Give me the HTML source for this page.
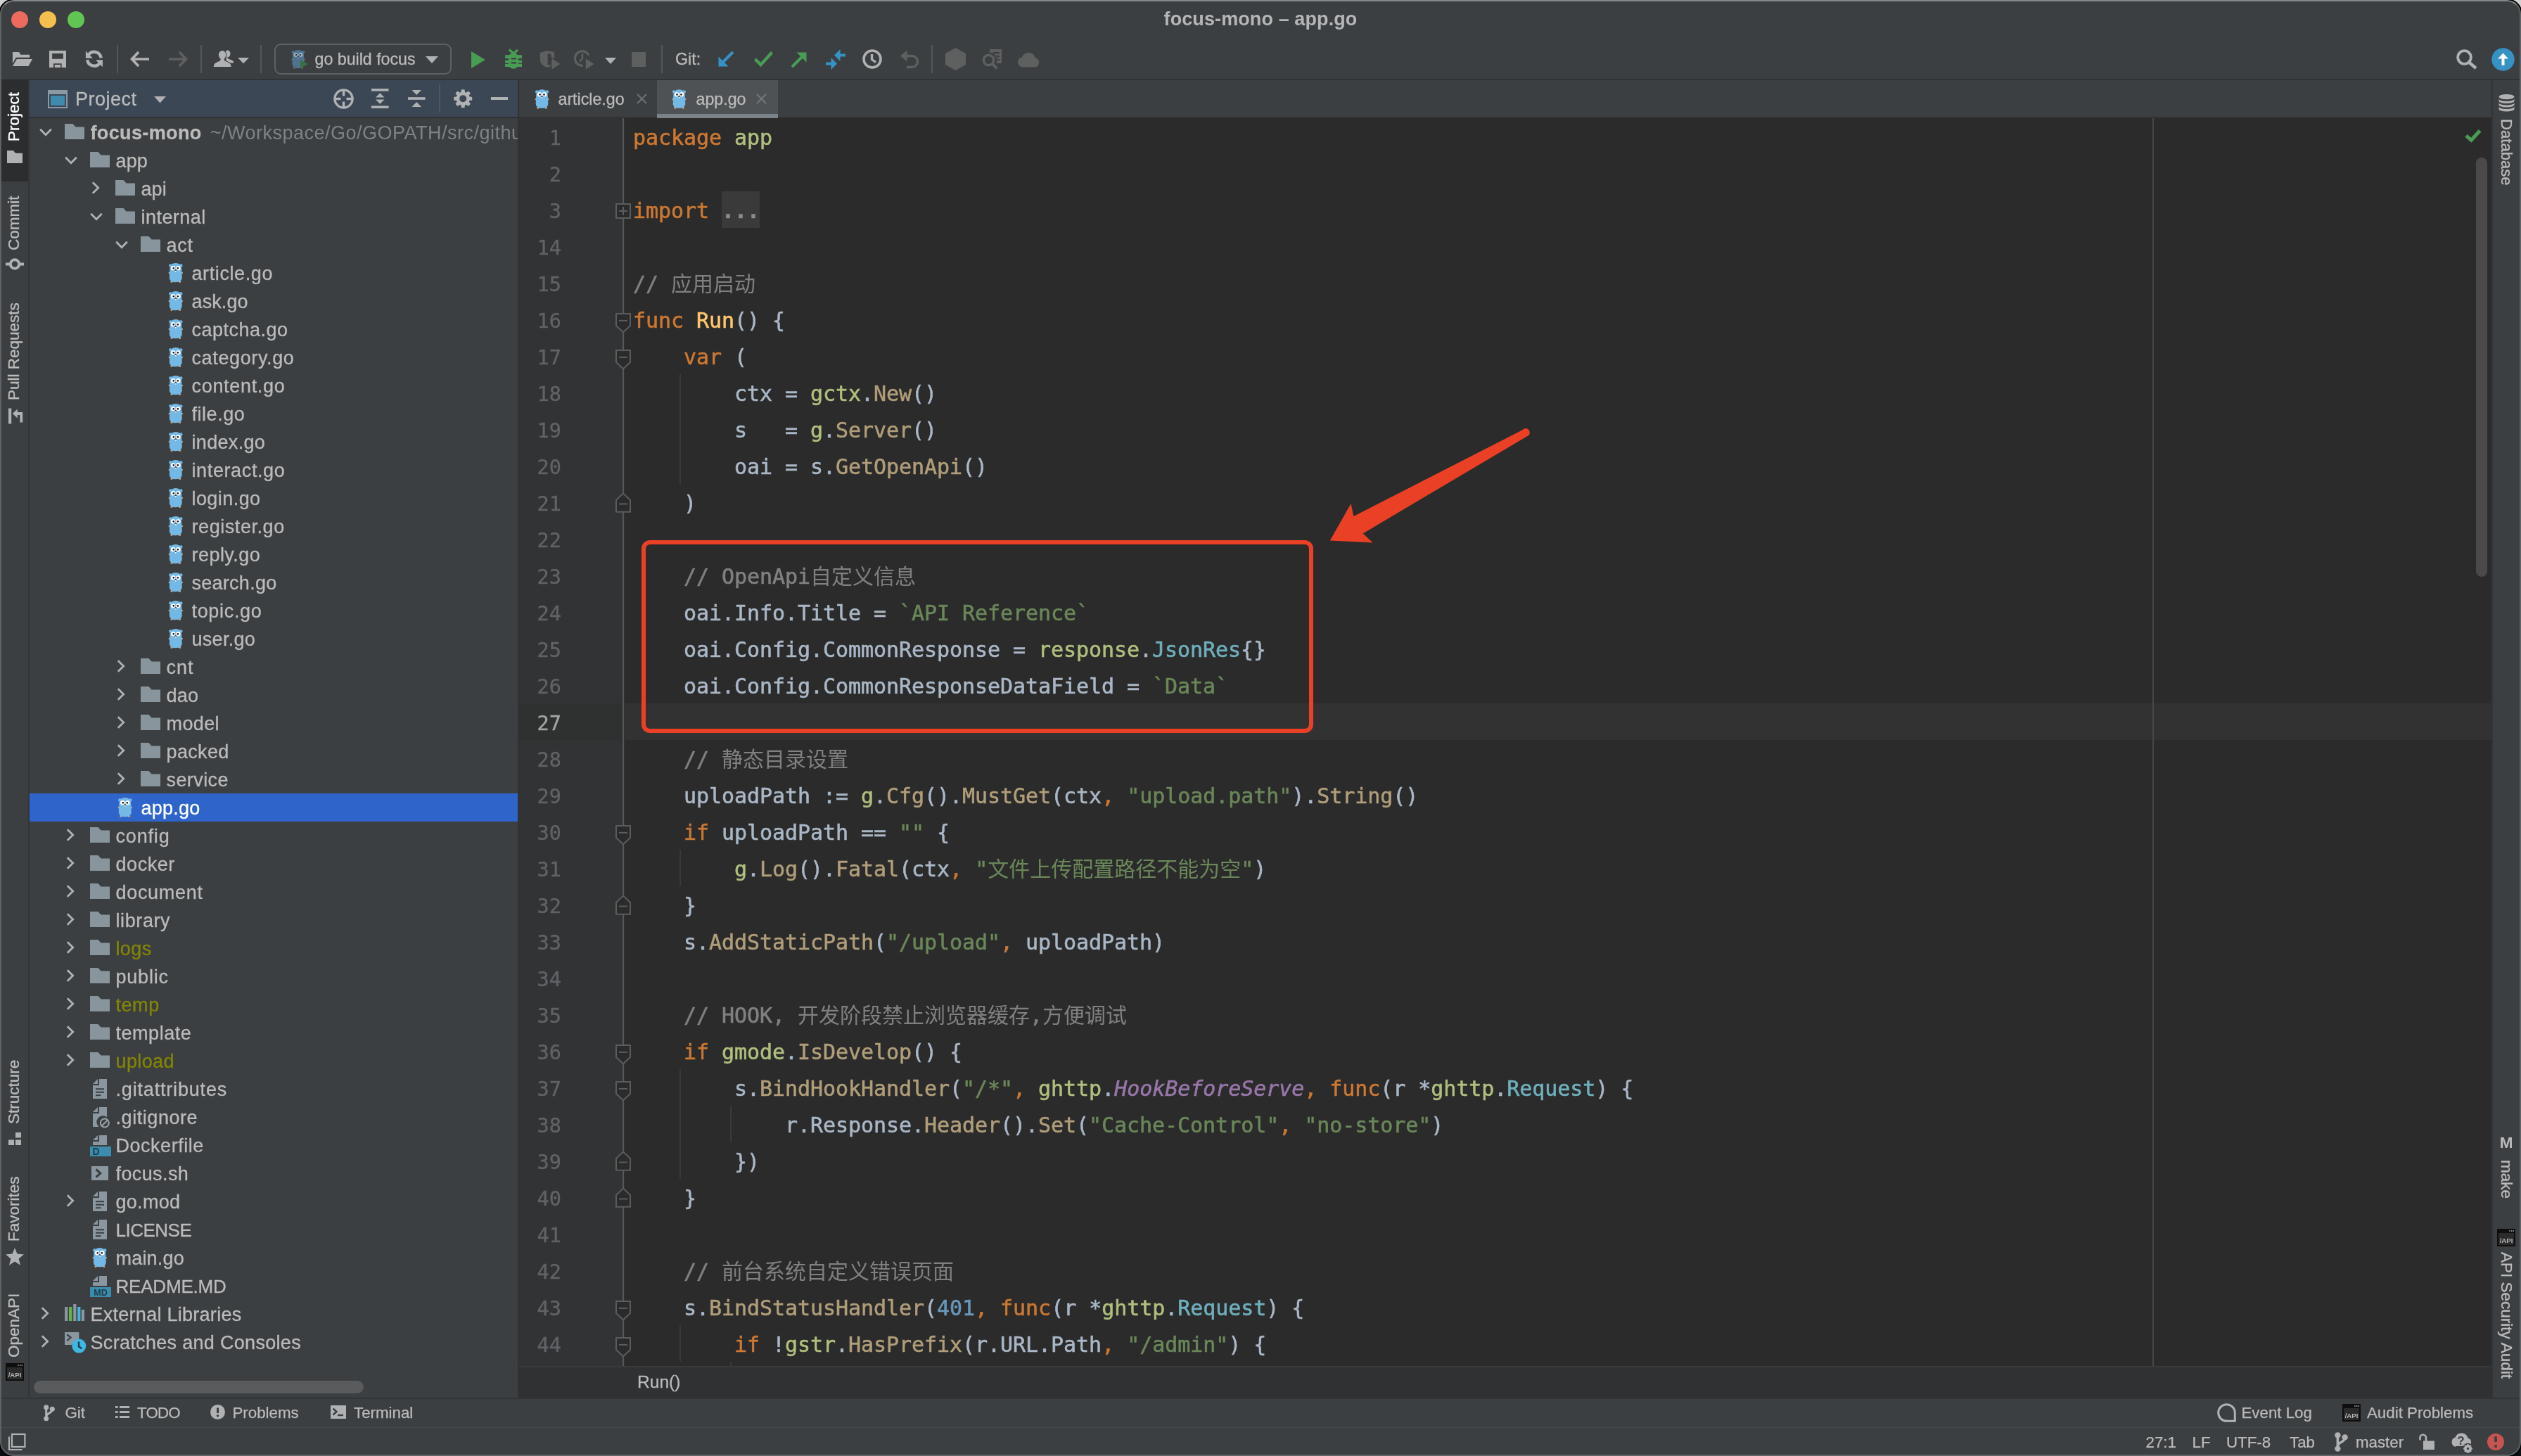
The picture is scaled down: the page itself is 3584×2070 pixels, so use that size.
<!DOCTYPE html>
<html lang="zh">
<head>
<meta charset="utf-8">
<title>focus-mono – app.go</title>
<style>
*{box-sizing:border-box;margin:0;padding:0}
html,body{width:3584px;height:2070px;overflow:hidden;background:linear-gradient(#d2d2d2 0,#d2d2d2 50%,#0c0f14 50%,#0c0f14 100%)}
body{position:relative;font-family:"Liberation Sans","Noto Sans CJK SC",sans-serif;color:#bbbbbb;-webkit-font-smoothing:antialiased}
.a{position:absolute}
.ui{font-size:27px;letter-spacing:.5px;white-space:nowrap;line-height:40px;-webkit-text-stroke:.3px}
.sm{font-size:22.3px;white-space:nowrap;line-height:28px;color:#bbbbbb;-webkit-text-stroke:.25px}
.code{font-family:"DejaVu Sans Mono","Liberation Mono","Noto Sans CJK SC",monospace;font-size:30px;letter-spacing:-.06px;white-space:pre;line-height:52px;color:#a9b7c6;-webkit-text-stroke:.55px}
.ln{font-family:"DejaVu Sans Mono","Liberation Mono",monospace;font-size:28.6px;letter-spacing:0;line-height:52px;color:#606366;text-align:right;white-space:pre;-webkit-text-stroke:.35px}
.k{color:#cc7832}.s{color:#6a8759}.c{color:#808080}.n{color:#6897bb}.fd{color:#ffc66d}.fc{color:#b09d79}.p{color:#afbf7e}.t{color:#6fafbd}.cn{color:#9876aa;font-style:italic}
.cj{font-family:"Noto Sans CJK SC",sans-serif;letter-spacing:0;line-height:0;-webkit-text-stroke:0}
.row{position:absolute;left:42px;width:694px;height:40px}
.row span{position:absolute;top:0;line-height:40px}
.ig{color:#848504}
svg{position:absolute;overflow:visible}
.vt{position:absolute;white-space:nowrap;-webkit-text-stroke:.35px;font-size:22px;line-height:26px;color:#bbbbbb;transform-origin:0 0}
</style>
</head>
<body>
<div id="app" style="position:absolute;left:0;top:0;width:3584px;height:2070px;will-change:transform;background:#3c3f41;border-radius:20px;overflow:hidden;box-shadow:0 0 0 2px #000">
<div class="a" style="left:16px;top:16px;width:24px;height:24px;background:#ed6a5e;border-radius:50%"></div>
<div class="a" style="left:56px;top:16px;width:24px;height:24px;background:#f5bf4f;border-radius:50%"></div>
<div class="a" style="left:96px;top:16px;width:24px;height:24px;background:#61c554;border-radius:50%"></div>
<div class="a" style="left:0;top:9px;width:3584px;text-align:center;font-weight:bold;font-size:27px;letter-spacing:.1px;line-height:36px;color:#b4b6b8">focus-mono – app.go</div>
<div class="a" style="left:0px;top:112px;width:3584px;height:2px;background:#313335;"></div>
<svg style="left:17px;top:73px;" width="30" height="22" viewBox="0 0 30 22"><path d="M0.93 0.9 H10.06 L12.4 4.87 H25.1 V8.8 H5.7 L0.93 17.5 Z M6.9 11 H29.1 L23.5 20.9 H0.93 Z" fill="#afb1b3"/></svg>
<svg style="left:70px;top:72px;" width="24" height="24" viewBox="0 0 24 24"><path d="M0 0H24V24H17.7V18.2H6V24H0Z M4.1 4.1V11.8H19.9V4.1Z M7.8 19.9h8.4v4.1h-8.4z" fill="#afb1b3" fill-rule="evenodd"/></svg>
<svg style="left:121px;top:71px;" width="26" height="26" viewBox="0 0 26 26"><path d="M4.8 7.1 A9.9 9.9 0 0 1 22.7 11.4" fill="none" stroke="#afb1b3" stroke-width="4.4"/><path d="M3.1 14.1 A9.9 9.9 0 0 0 21 18.4" fill="none" stroke="#afb1b3" stroke-width="4.4"/><path d="M0.9 1.6 V11.8 H11 Z" fill="#afb1b3"/><path d="M24.95 24.2 V14.26 H15 Z" fill="#afb1b3"/></svg>
<div class="a" style="left:166px;top:64px;width:2px;height:40px;background:#545657;"></div>
<div class="a" style="left:284.5px;top:64px;width:2px;height:40px;background:#545657;"></div>
<div class="a" style="left:369.6px;top:64px;width:2px;height:40px;background:#545657;"></div>
<div class="a" style="left:940px;top:64px;width:2px;height:40px;background:#545657;"></div>
<div class="a" style="left:1324px;top:64px;width:2px;height:40px;background:#545657;"></div>
<svg style="left:185px;top:72px;" width="28" height="24" viewBox="0 0 28 24"><path d="M12 2 L2.5 12 L12 22 M2.5 12 H27" fill="none" stroke="#afb1b3" stroke-width="3.6"/></svg>
<svg style="left:239px;top:72px;" width="28" height="24" viewBox="0 0 28 24"><path d="M16 2 L25.5 12 L16 22 M25.5 12 H1" fill="none" stroke="#5e6060" stroke-width="3.6"/></svg>
<svg style="left:303px;top:71px;" width="30" height="25" viewBox="0 0 30 25"><ellipse cx="20.6" cy="5.5" rx="3.9" ry="5" fill="#afb1b3"/><path d="M18 8 C20 12.8 23.5 13.4 26 14.3 C28.3 15.2 29.2 16.4 29.2 18.4 H19 Z" fill="#afb1b3"/><g stroke="#3c3f41" stroke-width="1.8"><ellipse cx="13.05" cy="7.1" rx="5.2" ry="6.2" fill="#afb1b3"/><path d="M10.8 12.5 C10.8 15.5 9.5 16 6 17.2 C2.5 18.5 0.9 20.5 0.7 23.9 H25.7 C25.5 20.5 23.9 18.5 20.4 17.2 C16.9 16 15.6 15.5 15.6 12.5 Z" fill="#afb1b3"/></g><ellipse cx="13.05" cy="7.1" rx="5.2" ry="6.2" fill="#afb1b3"/><path d="M10.8 12 C10.8 15.5 9.5 16 6 17.2 C2.5 18.5 0.9 20.5 0.7 23.9 H25.7 C25.5 20.5 23.9 18.5 20.4 17.2 C16.9 16 15.6 15.5 15.6 12 Z" fill="#afb1b3"/></svg>
<svg style="left:338px;top:81.8px;" width="16" height="8.2" viewBox="0 0 16 8.2"><path d="M0 0H16 L8 8.2 Z" fill="#afb1b3"/></svg>
<div class="a" style="left:390px;top:62px;width:252px;height:43.5px;border:2px solid #5e6163;border-radius:9px"></div>
<svg style="left:413px;top:70px;" width="22" height="28" viewBox="0 0 22 30"><circle cx="3.4" cy="4.6" r="2.4" fill="#4e7390"/><circle cx="18.6" cy="4.6" r="2.4" fill="#4e7390"/><circle cx="1.9" cy="15.5" r="1.4" fill="#6f6559"/><circle cx="20.1" cy="15.5" r="1.4" fill="#6f6559"/><circle cx="5" cy="28.3" r="1.6" fill="#6f6559"/><circle cx="17" cy="28.3" r="1.6" fill="#6f6559"/><path d="M2.3 10.5 C2.3 4 6 1 11 1 C16 1 19.7 4 19.7 10.5 L20.2 22 C20.2 27 16 29 11 29 C6 29 1.8 27 1.8 22 Z" fill="#4e7390"/><circle cx="7.3" cy="8.4" r="3.3" fill="#9fb0bb"/><circle cx="14.7" cy="8.4" r="3.3" fill="#9fb0bb"/><circle cx="7.9" cy="8.6" r="1.35" fill="#2e3a42"/><circle cx="14.1" cy="8.6" r="1.35" fill="#2e3a42"/><ellipse cx="11" cy="11.6" rx="1.5" ry="1" fill="#2e3a42"/><rect x="10.2" y="12.2" width="1.6" height="1.7" fill="#9fb0bb"/></svg>
<svg style="left:427px;top:85px;" width="11" height="12" viewBox="0 0 11 12"><path d="M0 0L11 6L0 12Z" fill="#3a6f45"/></svg>
<div class="a " style="left:447.5px;top:70px;font-size:23.2px;line-height:28px;white-space:nowrap;color:#bbbbbb;-webkit-text-stroke:.3px">go build focus</div>
<svg style="left:605px;top:80px;" width="18" height="10" viewBox="0 0 18 10"><path d="M0 0H18 L9 10 Z" fill="#afb1b3"/></svg>
<svg style="left:670px;top:72.5px;" width="20" height="24" viewBox="0 0 20 24"><path d="M0 0L20 12L0 24Z" fill="#499c54"/></svg>
<svg style="left:717px;top:70px;" width="26" height="28" viewBox="0 0 26 28"><path d="M6.8 0.3 L12.9 6 L19 1" stroke="#499c54" stroke-width="3.2" fill="none"/><path d="M12.95 5.5 C8.5 5.5 6 8.5 6 12.5 V20 C6 24.5 8.7 27.7 12.95 27.7 C17.2 27.7 19.9 24.5 19.9 20 V12.5 C19.9 8.5 17.4 5.5 12.95 5.5 Z" fill="#499c54"/><path d="M1.1 8.3H25V13H1.1Z M1.1 15.8H25V19.8H1.1Z M1.1 21H25V24.9H1.1Z" fill="#499c54"/><path d="M9.6 12.2H17.1V14.6H9.6Z M9.6 18.2H17.1V20.6H9.6Z" fill="#3c3f41"/></svg>
<svg style="left:767px;top:71px;" width="31" height="30" viewBox="0 0 31 30"><path d="M0.8 4.1 L10.7 0.9 L21.06 2.9 V14 C21 19 17 23 11.1 25.1 C5 23 0.8 19 0.8 14 Z" fill="#5e6060"/><rect x="11.6" y="5.7" width="4.6" height="15.4" fill="#3c3f41"/><path d="M16.7 10.8 L30.6 19.96 L16.7 29.1 Z" fill="#5e6060" stroke="#3c3f41" stroke-width="1.4"/></svg>
<svg style="left:815px;top:71px;" width="31" height="30" viewBox="0 0 31 30"><path d="M22.03 7.65 A10.3 10.3 0 1 0 13.6 22.26" fill="none" stroke="#5e6060" stroke-width="3.2"/><path d="M12.9 5.6 V12 L9.3 16.4" fill="none" stroke="#5e6060" stroke-width="2.6"/><path d="M17.1 10.8 L30.6 19.96 L17.1 29.1 Z" fill="#5e6060" stroke="#3c3f41" stroke-width="1.4"/></svg>
<svg style="left:860px;top:82px;" width="16" height="9" viewBox="0 0 16 9"><path d="M0 0H16 L8 9 Z" fill="#afb1b3"/></svg>
<div class="a" style="left:897.5px;top:74px;width:20.5px;height:20.5px;background:#5e6060;"></div>
<div class="a " style="left:960px;top:70px;font-size:23.2px;line-height:28px;white-space:nowrap;color:#bbbbbb;-webkit-text-stroke:.3px">Git:</div>
<svg style="left:1021px;top:72px;" width="23" height="23" viewBox="0 0 23 23"><path d="M21 2 L5 18" stroke="#3592c4" stroke-width="4" fill="none"/><path d="M0.5 8.5 V22.5 H14.5 Z" fill="#3592c4"/></svg>
<svg style="left:1072px;top:72px;" width="27" height="23" viewBox="0 0 27 23"><path d="M1.5 12 L9.5 20 L25.5 2.5" stroke="#499c54" stroke-width="4.4" fill="none"/></svg>
<svg style="left:1124px;top:73.5px;" width="23" height="23" viewBox="0 0 23 23"><path d="M2 21 L18 5" stroke="#499c54" stroke-width="4" fill="none"/><path d="M8.5 0.5 H22.5 V14.5 Z" fill="#499c54"/></svg>
<svg style="left:1174px;top:69.5px;" width="28" height="29" viewBox="0 0 28 29"><path d="M28 8.5 H18" stroke="#3592c4" stroke-width="4"/><path d="M12 8.5 L20.5 0 V17 Z" fill="#3592c4"/><path d="M0 20.5 H10" stroke="#3592c4" stroke-width="4"/><path d="M16 20.5 L7.5 12 V29 Z" fill="#3592c4"/></svg>
<svg style="left:1226px;top:70px;" width="28" height="28" viewBox="0 0 28 28"><circle cx="14" cy="14" r="12" fill="none" stroke="#afb1b3" stroke-width="3.6"/><path d="M13.5 7 V14.5 L19 18.5" fill="none" stroke="#afb1b3" stroke-width="3.4"/></svg>
<svg style="left:1279.5px;top:70.5px;" width="27" height="26" viewBox="0 0 27 26"><path d="M5 8.5 H16.5 A8 8 0 0 1 16.5 24.5 H9" fill="none" stroke="#5e6060" stroke-width="3.4"/><path d="M0 8.5 L9.5 0.5 V16.5 Z" fill="#5e6060"/></svg>
<svg style="left:1344px;top:68px;" width="29" height="32" viewBox="0 0 29 32"><path d="M14.5 0 L29 8 V24 L14.5 32 L0 24 V8 Z" fill="#5e6060"/></svg>
<svg style="left:1396px;top:70px;" width="29" height="29" viewBox="0 0 29 29"><path d="M11 0 H28 V20 H20.5 A11 11 0 0 0 11 4.6 Z M16 4 h9 v2.4 h-9z M19 8.8 h6 v2.4 h-6z M21 13.6 h4 v2.4 h-4z" fill="#5e6060" fill-rule="evenodd"/><circle cx="9.5" cy="15.5" r="7.2" fill="none" stroke="#5e6060" stroke-width="3.4"/><path d="M14.5 20.5 L21.5 27.5" stroke="#5e6060" stroke-width="3.8"/></svg>
<svg style="left:1446px;top:73px;" width="32" height="23" viewBox="0 0 32 23"><path d="M8 22.5 A7.2 7.2 0 0 1 7 8.2 A10 10 0 0 1 26 9.5 A6.6 6.6 0 0 1 25 22.5 Z" fill="#5e6060"/></svg>
<svg style="left:3492px;top:70px;" width="30" height="28" viewBox="0 0 30 28"><circle cx="11.5" cy="11.5" r="9.3" fill="none" stroke="#afb1b3" stroke-width="3.8"/><path d="M18 18.5 L28 27" stroke="#afb1b3" stroke-width="4.4"/></svg>
<svg style="left:3542px;top:68px;" width="33" height="33" viewBox="0 0 33 33"><circle cx="16.5" cy="16.5" r="16.2" fill="#3592c4"/><path d="M16.5 25 V11" stroke="#fff" stroke-width="4"/><path d="M9 15.5 L16.5 7.5 L24 15.5 Z" fill="#fff"/></svg>
<div class="a" style="left:42px;top:114px;width:694px;height:52px;background:#3b4754;"></div>
<div class="a" style="left:42px;top:166px;width:694px;height:2px;background:#2f3133;"></div>
<svg style="left:68px;top:128px;" width="28" height="26" viewBox="0 0 28 26"><rect x="0" y="0" width="28" height="26" fill="#8b99a5"/><rect x="2" y="6" width="24" height="18" fill="#3b4754"/><rect x="4" y="8" width="20" height="14" fill="#3d8bad"/></svg>
<div class="a ui" style="left:107px;top:121px;color:#bbbbbb">Project</div>
<svg style="left:219px;top:137px;" width="17" height="9.5" viewBox="0 0 17 9.5"><path d="M0 0H17 L8.5 9.5 Z" fill="#afb1b3"/></svg>
<svg style="left:473.5px;top:125.5px;" width="29" height="29" viewBox="0 0 29 29"><circle cx="14.5" cy="14.5" r="12.6" fill="none" stroke="#afb1b3" stroke-width="3.4"/><path d="M14.5 1V10.5M14.5 18.5V28M1 14.5H10.5M18.5 14.5H28" stroke="#afb1b3" stroke-width="3.4"/></svg>
<svg style="left:527.5px;top:126px;" width="24.5" height="28" viewBox="0 0 24.5 28"><rect x="0" y="0" width="24.5" height="3.6" fill="#afb1b3"/><rect x="0" y="24.4" width="24.5" height="3.6" fill="#afb1b3"/><path d="M6 12.5 L12.25 6.2 L18.5 12.5Z M6 15.5 L12.25 21.8 L18.5 15.5Z" fill="#afb1b3"/></svg>
<svg style="left:579.5px;top:127px;" width="24.5" height="26" viewBox="0 0 24.5 26"><rect x="0" y="11.2" width="24.5" height="3.6" fill="#afb1b3"/><path d="M5.5 1 L12.25 8 L19 1Z M5.5 25 L12.25 18 L19 25Z" fill="#afb1b3"/></svg>
<div class="a" style="left:624px;top:120px;width:2px;height:40px;background:#52575c;"></div>
<svg style="left:644.6px;top:126.6px;" width="26.4" height="26.4" viewBox="0 0 26.4 26.4"><path d="M10.97 0.19 L15.43 0.19 L16.13 4.06 L17.59 4.66 L20.82 2.42 L23.98 5.58 L21.74 8.81 L22.34 10.27 L26.21 10.97 L26.21 15.43 L22.34 16.13 L21.74 17.59 L23.98 20.82 L20.82 23.98 L17.59 21.74 L16.13 22.34 L15.43 26.21 L10.97 26.21 L10.27 22.34 L8.81 21.74 L5.58 23.98 L2.42 20.82 L4.66 17.59 L4.06 16.13 L0.19 15.43 L0.19 10.97 L4.06 10.27 L4.66 8.81 L2.42 5.58 L5.58 2.42 L8.81 4.66 L10.27 4.06Z M13.2 8.2 a5 5 0 1 0 0.01 0Z" fill="#afb1b3" fill-rule="evenodd"/></svg>
<div class="a" style="left:697.5px;top:137.5px;width:24.5px;height:4px;background:#afb1b3;"></div>
<svg style="left:56px;top:181.5px;" width="18" height="12" viewBox="0 0 18 12"><path d="M1.2 1.8 L9 9.7 L16.8 1.8" fill="none" stroke="#afb1b3" stroke-width="2.8"/></svg>
<svg style="left:91.8px;top:175.8px;" width="28" height="22" viewBox="0 0 28 22"><path d="M0 0 H11.5 L15.5 4.5 H28 V22 H0 Z" fill="#88959d"/></svg>
<div class="a ui" style="left:128.5px;top:169px;color:#bbbbbb;max-width:607.5px;overflow:hidden;letter-spacing:0.37px;font-size:27px"><b style="letter-spacing:0.37px">focus-mono</b><span style="color:#7f8284;padding-left:12px;-webkit-text-stroke:0;letter-spacing:.5px">~/Workspace/Go/GOPATH/src/githu</span></div>
<svg style="left:92px;top:221.5px;" width="18" height="12" viewBox="0 0 18 12"><path d="M1.2 1.8 L9 9.7 L16.8 1.8" fill="none" stroke="#afb1b3" stroke-width="2.8"/></svg>
<svg style="left:127.8px;top:215.8px;" width="28" height="22" viewBox="0 0 28 22"><path d="M0 0 H11.5 L15.5 4.5 H28 V22 H0 Z" fill="#88959d"/></svg>
<div class="a ui" style="left:164.5px;top:209px;color:#bbbbbb;max-width:571.5px;overflow:hidden;letter-spacing:0.15px;font-size:27px">app</div>
<svg style="left:129.7px;top:257.8px;" width="12" height="18" viewBox="0 0 12 18"><path d="M1.8 1.2 L9.7 9 L1.8 16.8" fill="none" stroke="#afb1b3" stroke-width="2.8"/></svg>
<svg style="left:163.8px;top:255.8px;" width="28" height="22" viewBox="0 0 28 22"><path d="M0 0 H11.5 L15.5 4.5 H28 V22 H0 Z" fill="#88959d"/></svg>
<div class="a ui" style="left:200.5px;top:249px;color:#bbbbbb;max-width:535.5px;overflow:hidden;letter-spacing:0.06px;font-size:27px">api</div>
<svg style="left:128px;top:301.5px;" width="18" height="12" viewBox="0 0 18 12"><path d="M1.2 1.8 L9 9.7 L16.8 1.8" fill="none" stroke="#afb1b3" stroke-width="2.8"/></svg>
<svg style="left:163.8px;top:295.8px;" width="28" height="22" viewBox="0 0 28 22"><path d="M0 0 H11.5 L15.5 4.5 H28 V22 H0 Z" fill="#88959d"/></svg>
<div class="a ui" style="left:200.5px;top:289px;color:#bbbbbb;max-width:535.5px;overflow:hidden;letter-spacing:0.46px;font-size:27px">internal</div>
<svg style="left:164px;top:341.5px;" width="18" height="12" viewBox="0 0 18 12"><path d="M1.2 1.8 L9 9.7 L16.8 1.8" fill="none" stroke="#afb1b3" stroke-width="2.8"/></svg>
<svg style="left:199.8px;top:335.8px;" width="28" height="22" viewBox="0 0 28 22"><path d="M0 0 H11.5 L15.5 4.5 H28 V22 H0 Z" fill="#88959d"/></svg>
<div class="a ui" style="left:236.5px;top:329px;color:#bbbbbb;max-width:499.5px;overflow:hidden;letter-spacing:0.79px;font-size:27px">act</div>
<svg style="left:239px;top:373.2px;" width="21.6" height="29.2" viewBox="0 0 22 30"><circle cx="3.4" cy="4.6" r="2.4" fill="#74b8e6"/><circle cx="18.6" cy="4.6" r="2.4" fill="#74b8e6"/><circle cx="1.9" cy="15.5" r="1.4" fill="#c9a27e"/><circle cx="20.1" cy="15.5" r="1.4" fill="#c9a27e"/><circle cx="5" cy="28.3" r="1.6" fill="#c9a27e"/><circle cx="17" cy="28.3" r="1.6" fill="#c9a27e"/><path d="M2.3 10.5 C2.3 4 6 1 11 1 C16 1 19.7 4 19.7 10.5 L20.2 22 C20.2 27 16 29 11 29 C6 29 1.8 27 1.8 22 Z" fill="#74b8e6"/><circle cx="7.3" cy="8.4" r="3.3" fill="#ffffff"/><circle cx="14.7" cy="8.4" r="3.3" fill="#ffffff"/><circle cx="7.9" cy="8.6" r="1.35" fill="#1b1b1b"/><circle cx="14.1" cy="8.6" r="1.35" fill="#1b1b1b"/><ellipse cx="11" cy="11.6" rx="1.5" ry="1" fill="#3b2f26"/><rect x="10.2" y="12.2" width="1.6" height="1.7" fill="#ffffff"/></svg>
<div class="a ui" style="left:272.5px;top:369px;color:#bbbbbb;max-width:463.5px;overflow:hidden;letter-spacing:0.60px;font-size:27px">article.go</div>
<svg style="left:239px;top:413.2px;" width="21.6" height="29.2" viewBox="0 0 22 30"><circle cx="3.4" cy="4.6" r="2.4" fill="#74b8e6"/><circle cx="18.6" cy="4.6" r="2.4" fill="#74b8e6"/><circle cx="1.9" cy="15.5" r="1.4" fill="#c9a27e"/><circle cx="20.1" cy="15.5" r="1.4" fill="#c9a27e"/><circle cx="5" cy="28.3" r="1.6" fill="#c9a27e"/><circle cx="17" cy="28.3" r="1.6" fill="#c9a27e"/><path d="M2.3 10.5 C2.3 4 6 1 11 1 C16 1 19.7 4 19.7 10.5 L20.2 22 C20.2 27 16 29 11 29 C6 29 1.8 27 1.8 22 Z" fill="#74b8e6"/><circle cx="7.3" cy="8.4" r="3.3" fill="#ffffff"/><circle cx="14.7" cy="8.4" r="3.3" fill="#ffffff"/><circle cx="7.9" cy="8.6" r="1.35" fill="#1b1b1b"/><circle cx="14.1" cy="8.6" r="1.35" fill="#1b1b1b"/><ellipse cx="11" cy="11.6" rx="1.5" ry="1" fill="#3b2f26"/><rect x="10.2" y="12.2" width="1.6" height="1.7" fill="#ffffff"/></svg>
<div class="a ui" style="left:272.5px;top:409px;color:#bbbbbb;max-width:463.5px;overflow:hidden;letter-spacing:0.11px;font-size:27px">ask.go</div>
<svg style="left:239px;top:453.2px;" width="21.6" height="29.2" viewBox="0 0 22 30"><circle cx="3.4" cy="4.6" r="2.4" fill="#74b8e6"/><circle cx="18.6" cy="4.6" r="2.4" fill="#74b8e6"/><circle cx="1.9" cy="15.5" r="1.4" fill="#c9a27e"/><circle cx="20.1" cy="15.5" r="1.4" fill="#c9a27e"/><circle cx="5" cy="28.3" r="1.6" fill="#c9a27e"/><circle cx="17" cy="28.3" r="1.6" fill="#c9a27e"/><path d="M2.3 10.5 C2.3 4 6 1 11 1 C16 1 19.7 4 19.7 10.5 L20.2 22 C20.2 27 16 29 11 29 C6 29 1.8 27 1.8 22 Z" fill="#74b8e6"/><circle cx="7.3" cy="8.4" r="3.3" fill="#ffffff"/><circle cx="14.7" cy="8.4" r="3.3" fill="#ffffff"/><circle cx="7.9" cy="8.6" r="1.35" fill="#1b1b1b"/><circle cx="14.1" cy="8.6" r="1.35" fill="#1b1b1b"/><ellipse cx="11" cy="11.6" rx="1.5" ry="1" fill="#3b2f26"/><rect x="10.2" y="12.2" width="1.6" height="1.7" fill="#ffffff"/></svg>
<div class="a ui" style="left:272.5px;top:449px;color:#bbbbbb;max-width:463.5px;overflow:hidden;letter-spacing:0.49px;font-size:27px">captcha.go</div>
<svg style="left:239px;top:493.2px;" width="21.6" height="29.2" viewBox="0 0 22 30"><circle cx="3.4" cy="4.6" r="2.4" fill="#74b8e6"/><circle cx="18.6" cy="4.6" r="2.4" fill="#74b8e6"/><circle cx="1.9" cy="15.5" r="1.4" fill="#c9a27e"/><circle cx="20.1" cy="15.5" r="1.4" fill="#c9a27e"/><circle cx="5" cy="28.3" r="1.6" fill="#c9a27e"/><circle cx="17" cy="28.3" r="1.6" fill="#c9a27e"/><path d="M2.3 10.5 C2.3 4 6 1 11 1 C16 1 19.7 4 19.7 10.5 L20.2 22 C20.2 27 16 29 11 29 C6 29 1.8 27 1.8 22 Z" fill="#74b8e6"/><circle cx="7.3" cy="8.4" r="3.3" fill="#ffffff"/><circle cx="14.7" cy="8.4" r="3.3" fill="#ffffff"/><circle cx="7.9" cy="8.6" r="1.35" fill="#1b1b1b"/><circle cx="14.1" cy="8.6" r="1.35" fill="#1b1b1b"/><ellipse cx="11" cy="11.6" rx="1.5" ry="1" fill="#3b2f26"/><rect x="10.2" y="12.2" width="1.6" height="1.7" fill="#ffffff"/></svg>
<div class="a ui" style="left:272.5px;top:489px;color:#bbbbbb;max-width:463.5px;overflow:hidden;letter-spacing:0.62px;font-size:27px">category.go</div>
<svg style="left:239px;top:533.2px;" width="21.6" height="29.2" viewBox="0 0 22 30"><circle cx="3.4" cy="4.6" r="2.4" fill="#74b8e6"/><circle cx="18.6" cy="4.6" r="2.4" fill="#74b8e6"/><circle cx="1.9" cy="15.5" r="1.4" fill="#c9a27e"/><circle cx="20.1" cy="15.5" r="1.4" fill="#c9a27e"/><circle cx="5" cy="28.3" r="1.6" fill="#c9a27e"/><circle cx="17" cy="28.3" r="1.6" fill="#c9a27e"/><path d="M2.3 10.5 C2.3 4 6 1 11 1 C16 1 19.7 4 19.7 10.5 L20.2 22 C20.2 27 16 29 11 29 C6 29 1.8 27 1.8 22 Z" fill="#74b8e6"/><circle cx="7.3" cy="8.4" r="3.3" fill="#ffffff"/><circle cx="14.7" cy="8.4" r="3.3" fill="#ffffff"/><circle cx="7.9" cy="8.6" r="1.35" fill="#1b1b1b"/><circle cx="14.1" cy="8.6" r="1.35" fill="#1b1b1b"/><ellipse cx="11" cy="11.6" rx="1.5" ry="1" fill="#3b2f26"/><rect x="10.2" y="12.2" width="1.6" height="1.7" fill="#ffffff"/></svg>
<div class="a ui" style="left:272.5px;top:529px;color:#bbbbbb;max-width:463.5px;overflow:hidden;letter-spacing:0.68px;font-size:27px">content.go</div>
<svg style="left:239px;top:573.2px;" width="21.6" height="29.2" viewBox="0 0 22 30"><circle cx="3.4" cy="4.6" r="2.4" fill="#74b8e6"/><circle cx="18.6" cy="4.6" r="2.4" fill="#74b8e6"/><circle cx="1.9" cy="15.5" r="1.4" fill="#c9a27e"/><circle cx="20.1" cy="15.5" r="1.4" fill="#c9a27e"/><circle cx="5" cy="28.3" r="1.6" fill="#c9a27e"/><circle cx="17" cy="28.3" r="1.6" fill="#c9a27e"/><path d="M2.3 10.5 C2.3 4 6 1 11 1 C16 1 19.7 4 19.7 10.5 L20.2 22 C20.2 27 16 29 11 29 C6 29 1.8 27 1.8 22 Z" fill="#74b8e6"/><circle cx="7.3" cy="8.4" r="3.3" fill="#ffffff"/><circle cx="14.7" cy="8.4" r="3.3" fill="#ffffff"/><circle cx="7.9" cy="8.6" r="1.35" fill="#1b1b1b"/><circle cx="14.1" cy="8.6" r="1.35" fill="#1b1b1b"/><ellipse cx="11" cy="11.6" rx="1.5" ry="1" fill="#3b2f26"/><rect x="10.2" y="12.2" width="1.6" height="1.7" fill="#ffffff"/></svg>
<div class="a ui" style="left:272.5px;top:569px;color:#bbbbbb;max-width:463.5px;overflow:hidden;letter-spacing:0.54px;font-size:27px">file.go</div>
<svg style="left:239px;top:613.2px;" width="21.6" height="29.2" viewBox="0 0 22 30"><circle cx="3.4" cy="4.6" r="2.4" fill="#74b8e6"/><circle cx="18.6" cy="4.6" r="2.4" fill="#74b8e6"/><circle cx="1.9" cy="15.5" r="1.4" fill="#c9a27e"/><circle cx="20.1" cy="15.5" r="1.4" fill="#c9a27e"/><circle cx="5" cy="28.3" r="1.6" fill="#c9a27e"/><circle cx="17" cy="28.3" r="1.6" fill="#c9a27e"/><path d="M2.3 10.5 C2.3 4 6 1 11 1 C16 1 19.7 4 19.7 10.5 L20.2 22 C20.2 27 16 29 11 29 C6 29 1.8 27 1.8 22 Z" fill="#74b8e6"/><circle cx="7.3" cy="8.4" r="3.3" fill="#ffffff"/><circle cx="14.7" cy="8.4" r="3.3" fill="#ffffff"/><circle cx="7.9" cy="8.6" r="1.35" fill="#1b1b1b"/><circle cx="14.1" cy="8.6" r="1.35" fill="#1b1b1b"/><ellipse cx="11" cy="11.6" rx="1.5" ry="1" fill="#3b2f26"/><rect x="10.2" y="12.2" width="1.6" height="1.7" fill="#ffffff"/></svg>
<div class="a ui" style="left:272.5px;top:609px;color:#bbbbbb;max-width:463.5px;overflow:hidden;letter-spacing:0.33px;font-size:27px">index.go</div>
<svg style="left:239px;top:653.2px;" width="21.6" height="29.2" viewBox="0 0 22 30"><circle cx="3.4" cy="4.6" r="2.4" fill="#74b8e6"/><circle cx="18.6" cy="4.6" r="2.4" fill="#74b8e6"/><circle cx="1.9" cy="15.5" r="1.4" fill="#c9a27e"/><circle cx="20.1" cy="15.5" r="1.4" fill="#c9a27e"/><circle cx="5" cy="28.3" r="1.6" fill="#c9a27e"/><circle cx="17" cy="28.3" r="1.6" fill="#c9a27e"/><path d="M2.3 10.5 C2.3 4 6 1 11 1 C16 1 19.7 4 19.7 10.5 L20.2 22 C20.2 27 16 29 11 29 C6 29 1.8 27 1.8 22 Z" fill="#74b8e6"/><circle cx="7.3" cy="8.4" r="3.3" fill="#ffffff"/><circle cx="14.7" cy="8.4" r="3.3" fill="#ffffff"/><circle cx="7.9" cy="8.6" r="1.35" fill="#1b1b1b"/><circle cx="14.1" cy="8.6" r="1.35" fill="#1b1b1b"/><ellipse cx="11" cy="11.6" rx="1.5" ry="1" fill="#3b2f26"/><rect x="10.2" y="12.2" width="1.6" height="1.7" fill="#ffffff"/></svg>
<div class="a ui" style="left:272.5px;top:649px;color:#bbbbbb;max-width:463.5px;overflow:hidden;letter-spacing:0.62px;font-size:27px">interact.go</div>
<svg style="left:239px;top:693.2px;" width="21.6" height="29.2" viewBox="0 0 22 30"><circle cx="3.4" cy="4.6" r="2.4" fill="#74b8e6"/><circle cx="18.6" cy="4.6" r="2.4" fill="#74b8e6"/><circle cx="1.9" cy="15.5" r="1.4" fill="#c9a27e"/><circle cx="20.1" cy="15.5" r="1.4" fill="#c9a27e"/><circle cx="5" cy="28.3" r="1.6" fill="#c9a27e"/><circle cx="17" cy="28.3" r="1.6" fill="#c9a27e"/><path d="M2.3 10.5 C2.3 4 6 1 11 1 C16 1 19.7 4 19.7 10.5 L20.2 22 C20.2 27 16 29 11 29 C6 29 1.8 27 1.8 22 Z" fill="#74b8e6"/><circle cx="7.3" cy="8.4" r="3.3" fill="#ffffff"/><circle cx="14.7" cy="8.4" r="3.3" fill="#ffffff"/><circle cx="7.9" cy="8.6" r="1.35" fill="#1b1b1b"/><circle cx="14.1" cy="8.6" r="1.35" fill="#1b1b1b"/><ellipse cx="11" cy="11.6" rx="1.5" ry="1" fill="#3b2f26"/><rect x="10.2" y="12.2" width="1.6" height="1.7" fill="#ffffff"/></svg>
<div class="a ui" style="left:272.5px;top:689px;color:#bbbbbb;max-width:463.5px;overflow:hidden;letter-spacing:0.43px;font-size:27px">login.go</div>
<svg style="left:239px;top:733.2px;" width="21.6" height="29.2" viewBox="0 0 22 30"><circle cx="3.4" cy="4.6" r="2.4" fill="#74b8e6"/><circle cx="18.6" cy="4.6" r="2.4" fill="#74b8e6"/><circle cx="1.9" cy="15.5" r="1.4" fill="#c9a27e"/><circle cx="20.1" cy="15.5" r="1.4" fill="#c9a27e"/><circle cx="5" cy="28.3" r="1.6" fill="#c9a27e"/><circle cx="17" cy="28.3" r="1.6" fill="#c9a27e"/><path d="M2.3 10.5 C2.3 4 6 1 11 1 C16 1 19.7 4 19.7 10.5 L20.2 22 C20.2 27 16 29 11 29 C6 29 1.8 27 1.8 22 Z" fill="#74b8e6"/><circle cx="7.3" cy="8.4" r="3.3" fill="#ffffff"/><circle cx="14.7" cy="8.4" r="3.3" fill="#ffffff"/><circle cx="7.9" cy="8.6" r="1.35" fill="#1b1b1b"/><circle cx="14.1" cy="8.6" r="1.35" fill="#1b1b1b"/><ellipse cx="11" cy="11.6" rx="1.5" ry="1" fill="#3b2f26"/><rect x="10.2" y="12.2" width="1.6" height="1.7" fill="#ffffff"/></svg>
<div class="a ui" style="left:272.5px;top:729px;color:#bbbbbb;max-width:463.5px;overflow:hidden;letter-spacing:0.56px;font-size:27px">register.go</div>
<svg style="left:239px;top:773.2px;" width="21.6" height="29.2" viewBox="0 0 22 30"><circle cx="3.4" cy="4.6" r="2.4" fill="#74b8e6"/><circle cx="18.6" cy="4.6" r="2.4" fill="#74b8e6"/><circle cx="1.9" cy="15.5" r="1.4" fill="#c9a27e"/><circle cx="20.1" cy="15.5" r="1.4" fill="#c9a27e"/><circle cx="5" cy="28.3" r="1.6" fill="#c9a27e"/><circle cx="17" cy="28.3" r="1.6" fill="#c9a27e"/><path d="M2.3 10.5 C2.3 4 6 1 11 1 C16 1 19.7 4 19.7 10.5 L20.2 22 C20.2 27 16 29 11 29 C6 29 1.8 27 1.8 22 Z" fill="#74b8e6"/><circle cx="7.3" cy="8.4" r="3.3" fill="#ffffff"/><circle cx="14.7" cy="8.4" r="3.3" fill="#ffffff"/><circle cx="7.9" cy="8.6" r="1.35" fill="#1b1b1b"/><circle cx="14.1" cy="8.6" r="1.35" fill="#1b1b1b"/><ellipse cx="11" cy="11.6" rx="1.5" ry="1" fill="#3b2f26"/><rect x="10.2" y="12.2" width="1.6" height="1.7" fill="#ffffff"/></svg>
<div class="a ui" style="left:272.5px;top:769px;color:#bbbbbb;max-width:463.5px;overflow:hidden;letter-spacing:0.46px;font-size:27px">reply.go</div>
<svg style="left:239px;top:813.2px;" width="21.6" height="29.2" viewBox="0 0 22 30"><circle cx="3.4" cy="4.6" r="2.4" fill="#74b8e6"/><circle cx="18.6" cy="4.6" r="2.4" fill="#74b8e6"/><circle cx="1.9" cy="15.5" r="1.4" fill="#c9a27e"/><circle cx="20.1" cy="15.5" r="1.4" fill="#c9a27e"/><circle cx="5" cy="28.3" r="1.6" fill="#c9a27e"/><circle cx="17" cy="28.3" r="1.6" fill="#c9a27e"/><path d="M2.3 10.5 C2.3 4 6 1 11 1 C16 1 19.7 4 19.7 10.5 L20.2 22 C20.2 27 16 29 11 29 C6 29 1.8 27 1.8 22 Z" fill="#74b8e6"/><circle cx="7.3" cy="8.4" r="3.3" fill="#ffffff"/><circle cx="14.7" cy="8.4" r="3.3" fill="#ffffff"/><circle cx="7.9" cy="8.6" r="1.35" fill="#1b1b1b"/><circle cx="14.1" cy="8.6" r="1.35" fill="#1b1b1b"/><ellipse cx="11" cy="11.6" rx="1.5" ry="1" fill="#3b2f26"/><rect x="10.2" y="12.2" width="1.6" height="1.7" fill="#ffffff"/></svg>
<div class="a ui" style="left:272.5px;top:809px;color:#bbbbbb;max-width:463.5px;overflow:hidden;letter-spacing:0.27px;font-size:27px">search.go</div>
<svg style="left:239px;top:853.2px;" width="21.6" height="29.2" viewBox="0 0 22 30"><circle cx="3.4" cy="4.6" r="2.4" fill="#74b8e6"/><circle cx="18.6" cy="4.6" r="2.4" fill="#74b8e6"/><circle cx="1.9" cy="15.5" r="1.4" fill="#c9a27e"/><circle cx="20.1" cy="15.5" r="1.4" fill="#c9a27e"/><circle cx="5" cy="28.3" r="1.6" fill="#c9a27e"/><circle cx="17" cy="28.3" r="1.6" fill="#c9a27e"/><path d="M2.3 10.5 C2.3 4 6 1 11 1 C16 1 19.7 4 19.7 10.5 L20.2 22 C20.2 27 16 29 11 29 C6 29 1.8 27 1.8 22 Z" fill="#74b8e6"/><circle cx="7.3" cy="8.4" r="3.3" fill="#ffffff"/><circle cx="14.7" cy="8.4" r="3.3" fill="#ffffff"/><circle cx="7.9" cy="8.6" r="1.35" fill="#1b1b1b"/><circle cx="14.1" cy="8.6" r="1.35" fill="#1b1b1b"/><ellipse cx="11" cy="11.6" rx="1.5" ry="1" fill="#3b2f26"/><rect x="10.2" y="12.2" width="1.6" height="1.7" fill="#ffffff"/></svg>
<div class="a ui" style="left:272.5px;top:849px;color:#bbbbbb;max-width:463.5px;overflow:hidden;letter-spacing:0.67px;font-size:27px">topic.go</div>
<svg style="left:239px;top:893.2px;" width="21.6" height="29.2" viewBox="0 0 22 30"><circle cx="3.4" cy="4.6" r="2.4" fill="#74b8e6"/><circle cx="18.6" cy="4.6" r="2.4" fill="#74b8e6"/><circle cx="1.9" cy="15.5" r="1.4" fill="#c9a27e"/><circle cx="20.1" cy="15.5" r="1.4" fill="#c9a27e"/><circle cx="5" cy="28.3" r="1.6" fill="#c9a27e"/><circle cx="17" cy="28.3" r="1.6" fill="#c9a27e"/><path d="M2.3 10.5 C2.3 4 6 1 11 1 C16 1 19.7 4 19.7 10.5 L20.2 22 C20.2 27 16 29 11 29 C6 29 1.8 27 1.8 22 Z" fill="#74b8e6"/><circle cx="7.3" cy="8.4" r="3.3" fill="#ffffff"/><circle cx="14.7" cy="8.4" r="3.3" fill="#ffffff"/><circle cx="7.9" cy="8.6" r="1.35" fill="#1b1b1b"/><circle cx="14.1" cy="8.6" r="1.35" fill="#1b1b1b"/><ellipse cx="11" cy="11.6" rx="1.5" ry="1" fill="#3b2f26"/><rect x="10.2" y="12.2" width="1.6" height="1.7" fill="#ffffff"/></svg>
<div class="a ui" style="left:272.5px;top:889px;color:#bbbbbb;max-width:463.5px;overflow:hidden;letter-spacing:0.29px;font-size:27px">user.go</div>
<svg style="left:165.7px;top:937.8px;" width="12" height="18" viewBox="0 0 12 18"><path d="M1.8 1.2 L9.7 9 L1.8 16.8" fill="none" stroke="#afb1b3" stroke-width="2.8"/></svg>
<svg style="left:199.8px;top:935.8px;" width="28" height="22" viewBox="0 0 28 22"><path d="M0 0 H11.5 L15.5 4.5 H28 V22 H0 Z" fill="#88959d"/></svg>
<div class="a ui" style="left:236.5px;top:929px;color:#bbbbbb;max-width:499.5px;overflow:hidden;letter-spacing:1.03px;font-size:27px">cnt</div>
<svg style="left:165.7px;top:977.8px;" width="12" height="18" viewBox="0 0 12 18"><path d="M1.8 1.2 L9.7 9 L1.8 16.8" fill="none" stroke="#afb1b3" stroke-width="2.8"/></svg>
<svg style="left:199.8px;top:975.8px;" width="28" height="22" viewBox="0 0 28 22"><path d="M0 0 H11.5 L15.5 4.5 H28 V22 H0 Z" fill="#88959d"/></svg>
<div class="a ui" style="left:236.5px;top:969px;color:#bbbbbb;max-width:499.5px;overflow:hidden;letter-spacing:0.25px;font-size:27px">dao</div>
<svg style="left:165.7px;top:1017.8px;" width="12" height="18" viewBox="0 0 12 18"><path d="M1.8 1.2 L9.7 9 L1.8 16.8" fill="none" stroke="#afb1b3" stroke-width="2.8"/></svg>
<svg style="left:199.8px;top:1015.8px;" width="28" height="22" viewBox="0 0 28 22"><path d="M0 0 H11.5 L15.5 4.5 H28 V22 H0 Z" fill="#88959d"/></svg>
<div class="a ui" style="left:236.5px;top:1009px;color:#bbbbbb;max-width:499.5px;overflow:hidden;letter-spacing:0.39px;font-size:27px">model</div>
<svg style="left:165.7px;top:1057.8px;" width="12" height="18" viewBox="0 0 12 18"><path d="M1.8 1.2 L9.7 9 L1.8 16.8" fill="none" stroke="#afb1b3" stroke-width="2.8"/></svg>
<svg style="left:199.8px;top:1055.8px;" width="28" height="22" viewBox="0 0 28 22"><path d="M0 0 H11.5 L15.5 4.5 H28 V22 H0 Z" fill="#88959d"/></svg>
<div class="a ui" style="left:236.5px;top:1049px;color:#bbbbbb;max-width:499.5px;overflow:hidden;letter-spacing:0.36px;font-size:27px">packed</div>
<svg style="left:165.7px;top:1097.8px;" width="12" height="18" viewBox="0 0 12 18"><path d="M1.8 1.2 L9.7 9 L1.8 16.8" fill="none" stroke="#afb1b3" stroke-width="2.8"/></svg>
<svg style="left:199.8px;top:1095.8px;" width="28" height="22" viewBox="0 0 28 22"><path d="M0 0 H11.5 L15.5 4.5 H28 V22 H0 Z" fill="#88959d"/></svg>
<div class="a ui" style="left:236.5px;top:1089px;color:#bbbbbb;max-width:499.5px;overflow:hidden;letter-spacing:0.41px;font-size:27px">service</div>
<div class="a" style="left:42px;top:1128px;width:694px;height:40px;background:#2f65ca;"></div>
<svg style="left:167px;top:1133.2px;" width="21.6" height="29.2" viewBox="0 0 22 30"><circle cx="3.4" cy="4.6" r="2.4" fill="#74b8e6"/><circle cx="18.6" cy="4.6" r="2.4" fill="#74b8e6"/><circle cx="1.9" cy="15.5" r="1.4" fill="#c9a27e"/><circle cx="20.1" cy="15.5" r="1.4" fill="#c9a27e"/><circle cx="5" cy="28.3" r="1.6" fill="#c9a27e"/><circle cx="17" cy="28.3" r="1.6" fill="#c9a27e"/><path d="M2.3 10.5 C2.3 4 6 1 11 1 C16 1 19.7 4 19.7 10.5 L20.2 22 C20.2 27 16 29 11 29 C6 29 1.8 27 1.8 22 Z" fill="#74b8e6"/><circle cx="7.3" cy="8.4" r="3.3" fill="#ffffff"/><circle cx="14.7" cy="8.4" r="3.3" fill="#ffffff"/><circle cx="7.9" cy="8.6" r="1.35" fill="#1b1b1b"/><circle cx="14.1" cy="8.6" r="1.35" fill="#1b1b1b"/><ellipse cx="11" cy="11.6" rx="1.5" ry="1" fill="#3b2f26"/><rect x="10.2" y="12.2" width="1.6" height="1.7" fill="#ffffff"/></svg>
<div class="a ui" style="left:200.5px;top:1129px;color:#ffffff;max-width:535.5px;overflow:hidden;letter-spacing:0.24px;font-size:27px">app.go</div>
<svg style="left:93.7px;top:1177.8px;" width="12" height="18" viewBox="0 0 12 18"><path d="M1.8 1.2 L9.7 9 L1.8 16.8" fill="none" stroke="#afb1b3" stroke-width="2.8"/></svg>
<svg style="left:127.8px;top:1175.8px;" width="28" height="22" viewBox="0 0 28 22"><path d="M0 0 H11.5 L15.5 4.5 H28 V22 H0 Z" fill="#88959d"/></svg>
<div class="a ui" style="left:164.5px;top:1169px;color:#bbbbbb;max-width:571.5px;overflow:hidden;letter-spacing:0.83px;font-size:27px">config</div>
<svg style="left:93.7px;top:1217.8px;" width="12" height="18" viewBox="0 0 12 18"><path d="M1.8 1.2 L9.7 9 L1.8 16.8" fill="none" stroke="#afb1b3" stroke-width="2.8"/></svg>
<svg style="left:127.8px;top:1215.8px;" width="28" height="22" viewBox="0 0 28 22"><path d="M0 0 H11.5 L15.5 4.5 H28 V22 H0 Z" fill="#88959d"/></svg>
<div class="a ui" style="left:164.5px;top:1209px;color:#bbbbbb;max-width:571.5px;overflow:hidden;letter-spacing:0.56px;font-size:27px">docker</div>
<svg style="left:93.7px;top:1257.8px;" width="12" height="18" viewBox="0 0 12 18"><path d="M1.8 1.2 L9.7 9 L1.8 16.8" fill="none" stroke="#afb1b3" stroke-width="2.8"/></svg>
<svg style="left:127.8px;top:1255.8px;" width="28" height="22" viewBox="0 0 28 22"><path d="M0 0 H11.5 L15.5 4.5 H28 V22 H0 Z" fill="#88959d"/></svg>
<div class="a ui" style="left:164.5px;top:1249px;color:#bbbbbb;max-width:571.5px;overflow:hidden;letter-spacing:0.69px;font-size:27px">document</div>
<svg style="left:93.7px;top:1297.8px;" width="12" height="18" viewBox="0 0 12 18"><path d="M1.8 1.2 L9.7 9 L1.8 16.8" fill="none" stroke="#afb1b3" stroke-width="2.8"/></svg>
<svg style="left:127.8px;top:1295.8px;" width="28" height="22" viewBox="0 0 28 22"><path d="M0 0 H11.5 L15.5 4.5 H28 V22 H0 Z" fill="#88959d"/></svg>
<div class="a ui" style="left:164.5px;top:1289px;color:#bbbbbb;max-width:571.5px;overflow:hidden;letter-spacing:0.60px;font-size:27px">library</div>
<svg style="left:93.7px;top:1337.8px;" width="12" height="18" viewBox="0 0 12 18"><path d="M1.8 1.2 L9.7 9 L1.8 16.8" fill="none" stroke="#afb1b3" stroke-width="2.8"/></svg>
<svg style="left:127.8px;top:1335.8px;" width="28" height="22" viewBox="0 0 28 22"><path d="M0 0 H11.5 L15.5 4.5 H28 V22 H0 Z" fill="#88959d"/></svg>
<div class="a ui" style="left:164.5px;top:1329px;color:#848504;max-width:571.5px;overflow:hidden;letter-spacing:0.37px;font-size:27px">logs</div>
<svg style="left:93.7px;top:1377.8px;" width="12" height="18" viewBox="0 0 12 18"><path d="M1.8 1.2 L9.7 9 L1.8 16.8" fill="none" stroke="#afb1b3" stroke-width="2.8"/></svg>
<svg style="left:127.8px;top:1375.8px;" width="28" height="22" viewBox="0 0 28 22"><path d="M0 0 H11.5 L15.5 4.5 H28 V22 H0 Z" fill="#88959d"/></svg>
<div class="a ui" style="left:164.5px;top:1369px;color:#bbbbbb;max-width:571.5px;overflow:hidden;letter-spacing:0.78px;font-size:27px">public</div>
<svg style="left:93.7px;top:1417.8px;" width="12" height="18" viewBox="0 0 12 18"><path d="M1.8 1.2 L9.7 9 L1.8 16.8" fill="none" stroke="#afb1b3" stroke-width="2.8"/></svg>
<svg style="left:127.8px;top:1415.8px;" width="28" height="22" viewBox="0 0 28 22"><path d="M0 0 H11.5 L15.5 4.5 H28 V22 H0 Z" fill="#88959d"/></svg>
<div class="a ui" style="left:164.5px;top:1409px;color:#848504;max-width:571.5px;overflow:hidden;letter-spacing:0.55px;font-size:27px">temp</div>
<svg style="left:93.7px;top:1457.8px;" width="12" height="18" viewBox="0 0 12 18"><path d="M1.8 1.2 L9.7 9 L1.8 16.8" fill="none" stroke="#afb1b3" stroke-width="2.8"/></svg>
<svg style="left:127.8px;top:1455.8px;" width="28" height="22" viewBox="0 0 28 22"><path d="M0 0 H11.5 L15.5 4.5 H28 V22 H0 Z" fill="#88959d"/></svg>
<div class="a ui" style="left:164.5px;top:1449px;color:#bbbbbb;max-width:571.5px;overflow:hidden;letter-spacing:0.53px;font-size:27px">template</div>
<svg style="left:93.7px;top:1497.8px;" width="12" height="18" viewBox="0 0 12 18"><path d="M1.8 1.2 L9.7 9 L1.8 16.8" fill="none" stroke="#afb1b3" stroke-width="2.8"/></svg>
<svg style="left:127.8px;top:1495.8px;" width="28" height="22" viewBox="0 0 28 22"><path d="M0 0 H11.5 L15.5 4.5 H28 V22 H0 Z" fill="#88959d"/></svg>
<div class="a ui" style="left:164.5px;top:1489px;color:#848504;max-width:571.5px;overflow:hidden;letter-spacing:0.37px;font-size:27px">upload</div>
<svg style="left:132px;top:1534px;" width="20" height="28" viewBox="0 0 20 28"><path d="M9 0 H20 V28 H0 V9 H9 Z" fill="#8a97a0"/><path d="M7 0 V7 H0 Z" fill="#8a97a0"/><path d="M4 14.2H16M4 18.7H16M4 23.2H11.5" stroke="#3c3f41" stroke-width="2"/></svg>
<div class="a ui" style="left:164.5px;top:1529px;color:#bbbbbb;max-width:571.5px;overflow:hidden;letter-spacing:0.82px;font-size:27px">.gitattributes</div>
<svg style="left:132px;top:1574px;" width="25" height="30" viewBox="0 0 25 30"><path d="M9 0 H20 V14.2 A8.6 8.6 0 0 0 8.6 28 H0 V9 H9 Z" fill="#8a97a0"/><path d="M7 0 V7 H0 Z" fill="#8a97a0"/><circle cx="16.8" cy="22.6" r="6" fill="none" stroke="#9aa7b0" stroke-width="2"/><path d="M12.6 26.8 L21 18.4" stroke="#9aa7b0" stroke-width="2"/></svg>
<div class="a ui" style="left:164.5px;top:1569px;color:#bbbbbb;max-width:571.5px;overflow:hidden;letter-spacing:0.56px;font-size:27px">.gitignore</div>
<svg style="left:128px;top:1614px;" width="30" height="30" viewBox="0 0 30 30"><path d="M13 0 H24 V14 H4 V9 H13 Z" fill="#8a97a0"/><path d="M11 0 V7 H4 Z" fill="#8a97a0"/><rect x="0" y="16" width="30" height="14" fill="#3b8cad"/><text x="3.5" y="28.4" font-family="Liberation Sans, sans-serif" font-weight="bold" font-size="14" fill="#1f3a4a" >D</text></svg>
<div class="a ui" style="left:164.5px;top:1609px;color:#bbbbbb;max-width:571.5px;overflow:hidden;letter-spacing:0.52px;font-size:27px">Dockerfile</div>
<svg style="left:130px;top:1658px;" width="24" height="20" viewBox="0 0 24 20"><rect x="0" y="0" width="24" height="20" fill="#8a97a0"/><path d="M6.5 4.5 L12.8 10 L6.5 15.5" fill="none" stroke="#3c3f41" stroke-width="3"/></svg>
<div class="a ui" style="left:164.5px;top:1649px;color:#bbbbbb;max-width:571.5px;overflow:hidden;letter-spacing:0.39px;font-size:27px">focus.sh</div>
<svg style="left:93.7px;top:1697.8px;" width="12" height="18" viewBox="0 0 12 18"><path d="M1.8 1.2 L9.7 9 L1.8 16.8" fill="none" stroke="#afb1b3" stroke-width="2.8"/></svg>
<svg style="left:132px;top:1694px;" width="20" height="28" viewBox="0 0 20 28"><path d="M9 0 H20 V28 H0 V9 H9 Z" fill="#8a97a0"/><path d="M7 0 V7 H0 Z" fill="#8a97a0"/><path d="M4 14.2H16M4 18.7H16M4 23.2H11.5" stroke="#3c3f41" stroke-width="2"/></svg>
<div class="a ui" style="left:164.5px;top:1689px;color:#bbbbbb;max-width:571.5px;overflow:hidden;letter-spacing:0.29px;font-size:27px">go.mod</div>
<svg style="left:132px;top:1734px;" width="20" height="28" viewBox="0 0 20 28"><path d="M9 0 H20 V28 H0 V9 H9 Z" fill="#8a97a0"/><path d="M7 0 V7 H0 Z" fill="#8a97a0"/><path d="M4 14.2H16M4 18.7H16M4 23.2H11.5" stroke="#3c3f41" stroke-width="2"/></svg>
<div class="a ui" style="left:164.5px;top:1729px;color:#bbbbbb;max-width:571.5px;overflow:hidden;letter-spacing:-0.50px;font-size:26px">LICENSE</div>
<svg style="left:131px;top:1773.2px;" width="21.6" height="29.2" viewBox="0 0 22 30"><circle cx="3.4" cy="4.6" r="2.4" fill="#74b8e6"/><circle cx="18.6" cy="4.6" r="2.4" fill="#74b8e6"/><circle cx="1.9" cy="15.5" r="1.4" fill="#c9a27e"/><circle cx="20.1" cy="15.5" r="1.4" fill="#c9a27e"/><circle cx="5" cy="28.3" r="1.6" fill="#c9a27e"/><circle cx="17" cy="28.3" r="1.6" fill="#c9a27e"/><path d="M2.3 10.5 C2.3 4 6 1 11 1 C16 1 19.7 4 19.7 10.5 L20.2 22 C20.2 27 16 29 11 29 C6 29 1.8 27 1.8 22 Z" fill="#74b8e6"/><circle cx="7.3" cy="8.4" r="3.3" fill="#ffffff"/><circle cx="14.7" cy="8.4" r="3.3" fill="#ffffff"/><circle cx="7.9" cy="8.6" r="1.35" fill="#1b1b1b"/><circle cx="14.1" cy="8.6" r="1.35" fill="#1b1b1b"/><ellipse cx="11" cy="11.6" rx="1.5" ry="1" fill="#3b2f26"/><rect x="10.2" y="12.2" width="1.6" height="1.7" fill="#ffffff"/></svg>
<div class="a ui" style="left:164.5px;top:1769px;color:#bbbbbb;max-width:571.5px;overflow:hidden;letter-spacing:0.19px;font-size:27px">main.go</div>
<svg style="left:128px;top:1814px;" width="30" height="30" viewBox="0 0 30 30"><path d="M13 0 H24 V14 H4 V9 H13 Z" fill="#8a97a0"/><path d="M11 0 V7 H4 Z" fill="#8a97a0"/><rect x="0" y="16" width="30" height="14" fill="#3b8cad"/><text x="15" y="28.4" font-family="Liberation Sans, sans-serif" font-weight="bold" font-size="12.5" fill="#1f3a4a" text-anchor="middle">MD</text></svg>
<div class="a ui" style="left:164.5px;top:1809px;color:#bbbbbb;max-width:571.5px;overflow:hidden;letter-spacing:-0.20px;font-size:26px">README.MD</div>
<svg style="left:57.7px;top:1857.8px;" width="12" height="18" viewBox="0 0 12 18"><path d="M1.8 1.2 L9.7 9 L1.8 16.8" fill="none" stroke="#afb1b3" stroke-width="2.8"/></svg>
<svg style="left:91.7px;top:1853.7px;" width="28" height="24" viewBox="0 0 28 24"><rect x="0" y="4" width="4.4" height="20" fill="#8a97a0"/><rect x="6" y="4" width="4.4" height="20" fill="#62b543"/><rect x="12.2" y="0" width="4.2" height="24" fill="#8a97a0"/><rect x="18.2" y="4" width="4.2" height="20" fill="#40b6e0"/><rect x="23.8" y="8" width="4.2" height="16" fill="#8a97a0"/></svg>
<div class="a ui" style="left:128.5px;top:1849px;color:#bbbbbb;max-width:607.5px;overflow:hidden;letter-spacing:0.27px;font-size:27px">External Libraries</div>
<svg style="left:57.7px;top:1897.8px;" width="12" height="18" viewBox="0 0 12 18"><path d="M1.8 1.2 L9.7 9 L1.8 16.8" fill="none" stroke="#afb1b3" stroke-width="2.8"/></svg>
<svg style="left:91.7px;top:1894px;" width="31" height="30" viewBox="0 0 31 30"><path d="M0 0 H20.3 V11.5 A10 10 0 0 0 10.2 18 H0 Z" fill="#8a97a0"/><path d="M3.2 3.2 L8.6 7.6 L3.2 12" fill="none" stroke="#3c3f41" stroke-width="2.2"/><circle cx="20.3" cy="19.6" r="10" fill="#40b6e0"/><path d="M20 13.6 V20.3 L24.2 23.2" fill="none" stroke="#1f3a4a" stroke-width="2.4"/></svg>
<div class="a ui" style="left:128.5px;top:1889px;color:#bbbbbb;max-width:607.5px;overflow:hidden;letter-spacing:0.31px;font-size:27px">Scratches and Consoles</div>
<div class="a" style="left:47.5px;top:1963px;width:469px;height:17.5px;background:#595b5d;border-radius:9px"></div>
<div class="a" style="left:736px;top:114px;width:2px;height:1873px;background:#2f3133;"></div>
<div class="a" style="left:738px;top:166px;width:2804px;height:2px;background:#323232;"></div>
<svg style="left:759.5px;top:125.5px;" width="21" height="29" viewBox="0 0 22 30"><circle cx="3.4" cy="4.6" r="2.4" fill="#74b8e6"/><circle cx="18.6" cy="4.6" r="2.4" fill="#74b8e6"/><circle cx="1.9" cy="15.5" r="1.4" fill="#c9a27e"/><circle cx="20.1" cy="15.5" r="1.4" fill="#c9a27e"/><circle cx="5" cy="28.3" r="1.6" fill="#c9a27e"/><circle cx="17" cy="28.3" r="1.6" fill="#c9a27e"/><path d="M2.3 10.5 C2.3 4 6 1 11 1 C16 1 19.7 4 19.7 10.5 L20.2 22 C20.2 27 16 29 11 29 C6 29 1.8 27 1.8 22 Z" fill="#74b8e6"/><circle cx="7.3" cy="8.4" r="3.3" fill="#ffffff"/><circle cx="14.7" cy="8.4" r="3.3" fill="#ffffff"/><circle cx="7.9" cy="8.6" r="1.35" fill="#1b1b1b"/><circle cx="14.1" cy="8.6" r="1.35" fill="#1b1b1b"/><ellipse cx="11" cy="11.6" rx="1.5" ry="1" fill="#3b2f26"/><rect x="10.2" y="12.2" width="1.6" height="1.7" fill="#ffffff"/></svg>
<div class="a " style="left:793.5px;top:126.5px;font-size:23.2px;line-height:28px;white-space:nowrap;color:#bbbbbb;-webkit-text-stroke:.3px">article.go</div>
<svg style="left:905px;top:133px;" width="15" height="15" viewBox="0 0 15 15"><path d="M1 1L14 14M14 1L1 14" stroke="#6e7275" stroke-width="2"/></svg>
<div class="a" style="left:934px;top:114px;width:172px;height:53px;background:#4e5254;"></div>
<div class="a" style="left:934px;top:162px;width:172px;height:6px;background:#7b8389;"></div>
<svg style="left:955px;top:125.5px;" width="21" height="29" viewBox="0 0 22 30"><circle cx="3.4" cy="4.6" r="2.4" fill="#74b8e6"/><circle cx="18.6" cy="4.6" r="2.4" fill="#74b8e6"/><circle cx="1.9" cy="15.5" r="1.4" fill="#c9a27e"/><circle cx="20.1" cy="15.5" r="1.4" fill="#c9a27e"/><circle cx="5" cy="28.3" r="1.6" fill="#c9a27e"/><circle cx="17" cy="28.3" r="1.6" fill="#c9a27e"/><path d="M2.3 10.5 C2.3 4 6 1 11 1 C16 1 19.7 4 19.7 10.5 L20.2 22 C20.2 27 16 29 11 29 C6 29 1.8 27 1.8 22 Z" fill="#74b8e6"/><circle cx="7.3" cy="8.4" r="3.3" fill="#ffffff"/><circle cx="14.7" cy="8.4" r="3.3" fill="#ffffff"/><circle cx="7.9" cy="8.6" r="1.35" fill="#1b1b1b"/><circle cx="14.1" cy="8.6" r="1.35" fill="#1b1b1b"/><ellipse cx="11" cy="11.6" rx="1.5" ry="1" fill="#3b2f26"/><rect x="10.2" y="12.2" width="1.6" height="1.7" fill="#ffffff"/></svg>
<div class="a " style="left:989.5px;top:126.5px;font-size:23.2px;line-height:28px;white-space:nowrap;color:#bbbbbb;-webkit-text-stroke:.3px">app.go</div>
<svg style="left:1074.5px;top:133px;" width="15" height="15" viewBox="0 0 15 15"><path d="M1 1L14 14M14 1L1 14" stroke="#73787b" stroke-width="2"/></svg>
<div class="a" style="left:738px;top:168px;width:2804px;height:1774px;background:#2b2b2b;"></div>
<div class="a" style="left:738px;top:168px;width:150px;height:1774px;background:#313335;"></div>
<div class="a" style="left:738px;top:1000px;width:150px;height:52px;background:#2f3030;"></div>
<div class="a" style="left:888px;top:1000px;width:2654px;height:52px;background:#323232;"></div>
<div class="a" style="left:885px;top:168px;width:2px;height:1774px;background:#555759;"></div>
<div class="a" style="left:3059.6px;top:168px;width:2px;height:1774px;background:#474747;"></div>
<div class="a" style="left:966px;top:532px;width:2px;height:156px;background:#393939;"></div>
<div class="a" style="left:966px;top:1208px;width:2px;height:52px;background:#393939;"></div>
<div class="a" style="left:966px;top:1520px;width:2px;height:156px;background:#393939;"></div>
<div class="a" style="left:1038px;top:1572px;width:2px;height:52px;background:#393939;"></div>
<div class="a" style="left:966px;top:1884px;width:2px;height:52px;background:#393939;"></div>
<div class="a" style="left:1038px;top:1936px;width:2px;height:6px;background:#393939;"></div>
<div class="a" style="left:1026px;top:272px;width:54px;height:52px;background:#3a3a3a;"></div>
<div class="a ln" style="left:738px;top:170px;width:60px;height:52px;color:#606366">1</div>
<div class="a code" style="left:900px;top:170px;height:52px"><span class="k">package</span> <span class="p">app</span></div>
<div class="a ln" style="left:738px;top:222px;width:60px;height:52px;color:#606366">2</div>
<div class="a ln" style="left:738px;top:274px;width:60px;height:52px;color:#606366">3</div>
<div class="a code" style="left:900px;top:274px;height:52px"><span class="k">import</span> <span style="color:#8c8c8c;font-weight:bold">...</span></div>
<div class="a ln" style="left:738px;top:326px;width:60px;height:52px;color:#606366">14</div>
<div class="a ln" style="left:738px;top:378px;width:60px;height:52px;color:#606366">15</div>
<div class="a code" style="left:900px;top:378px;height:52px"><span class="c">// <span class="cj">应用启动</span></span></div>
<div class="a ln" style="left:738px;top:430px;width:60px;height:52px;color:#606366">16</div>
<div class="a code" style="left:900px;top:430px;height:52px"><span class="k">func</span> <span class="fd">Run</span>() {</div>
<div class="a ln" style="left:738px;top:482px;width:60px;height:52px;color:#606366">17</div>
<div class="a code" style="left:900px;top:482px;height:52px">    <span class="k">var</span> (</div>
<div class="a ln" style="left:738px;top:534px;width:60px;height:52px;color:#606366">18</div>
<div class="a code" style="left:900px;top:534px;height:52px">        ctx = <span class="p">gctx</span>.<span class="fc">New</span>()</div>
<div class="a ln" style="left:738px;top:586px;width:60px;height:52px;color:#606366">19</div>
<div class="a code" style="left:900px;top:586px;height:52px">        s   = <span class="p">g</span>.<span class="fc">Server</span>()</div>
<div class="a ln" style="left:738px;top:638px;width:60px;height:52px;color:#606366">20</div>
<div class="a code" style="left:900px;top:638px;height:52px">        oai = s.<span class="fc">GetOpenApi</span>()</div>
<div class="a ln" style="left:738px;top:690px;width:60px;height:52px;color:#606366">21</div>
<div class="a code" style="left:900px;top:690px;height:52px">    )</div>
<div class="a ln" style="left:738px;top:742px;width:60px;height:52px;color:#606366">22</div>
<div class="a ln" style="left:738px;top:794px;width:60px;height:52px;color:#606366">23</div>
<div class="a code" style="left:900px;top:794px;height:52px">    <span class="c">// OpenApi<span class="cj">自定义信息</span></span></div>
<div class="a ln" style="left:738px;top:846px;width:60px;height:52px;color:#606366">24</div>
<div class="a code" style="left:900px;top:846px;height:52px">    oai.Info.Title = <span class="s">`API Reference`</span></div>
<div class="a ln" style="left:738px;top:898px;width:60px;height:52px;color:#606366">25</div>
<div class="a code" style="left:900px;top:898px;height:52px">    oai.Config.CommonResponse = <span class="p">response</span>.<span class="t">JsonRes</span>{}</div>
<div class="a ln" style="left:738px;top:950px;width:60px;height:52px;color:#606366">26</div>
<div class="a code" style="left:900px;top:950px;height:52px">    oai.Config.CommonResponseDataField = <span class="s">`Data`</span></div>
<div class="a ln" style="left:738px;top:1002px;width:60px;height:52px;color:#a4a3a3">27</div>
<div class="a ln" style="left:738px;top:1054px;width:60px;height:52px;color:#606366">28</div>
<div class="a code" style="left:900px;top:1054px;height:52px">    <span class="c">// <span class="cj">静态目录设置</span></span></div>
<div class="a ln" style="left:738px;top:1106px;width:60px;height:52px;color:#606366">29</div>
<div class="a code" style="left:900px;top:1106px;height:52px">    uploadPath := <span class="p">g</span>.<span class="fc">Cfg</span>().<span class="fc">MustGet</span>(ctx<span class="k">,</span> <span class="s">&quot;upload.path&quot;</span>).<span class="fc">String</span>()</div>
<div class="a ln" style="left:738px;top:1158px;width:60px;height:52px;color:#606366">30</div>
<div class="a code" style="left:900px;top:1158px;height:52px">    <span class="k">if</span> uploadPath == <span class="s">&quot;&quot;</span> {</div>
<div class="a ln" style="left:738px;top:1210px;width:60px;height:52px;color:#606366">31</div>
<div class="a code" style="left:900px;top:1210px;height:52px">        <span class="p">g</span>.<span class="fc">Log</span>().<span class="fc">Fatal</span>(ctx<span class="k">,</span> <span class="s">&quot;<span class="cj">文件上传配置路径不能为空</span>&quot;</span>)</div>
<div class="a ln" style="left:738px;top:1262px;width:60px;height:52px;color:#606366">32</div>
<div class="a code" style="left:900px;top:1262px;height:52px">    }</div>
<div class="a ln" style="left:738px;top:1314px;width:60px;height:52px;color:#606366">33</div>
<div class="a code" style="left:900px;top:1314px;height:52px">    s.<span class="fc">AddStaticPath</span>(<span class="s">&quot;/upload&quot;</span><span class="k">,</span> uploadPath)</div>
<div class="a ln" style="left:738px;top:1366px;width:60px;height:52px;color:#606366">34</div>
<div class="a ln" style="left:738px;top:1418px;width:60px;height:52px;color:#606366">35</div>
<div class="a code" style="left:900px;top:1418px;height:52px">    <span class="c">// HOOK, <span class="cj">开发阶段禁止浏览器缓存</span>,<span class="cj">方便调试</span></span></div>
<div class="a ln" style="left:738px;top:1470px;width:60px;height:52px;color:#606366">36</div>
<div class="a code" style="left:900px;top:1470px;height:52px">    <span class="k">if</span> <span class="p">gmode</span>.<span class="fc">IsDevelop</span>() {</div>
<div class="a ln" style="left:738px;top:1522px;width:60px;height:52px;color:#606366">37</div>
<div class="a code" style="left:900px;top:1522px;height:52px">        s.<span class="fc">BindHookHandler</span>(<span class="s">&quot;/*&quot;</span><span class="k">,</span> <span class="p">ghttp</span>.<span class="cn">HookBeforeServe</span><span class="k">,</span> <span class="k">func</span>(r *<span class="p">ghttp</span>.<span class="t">Request</span>) {</div>
<div class="a ln" style="left:738px;top:1574px;width:60px;height:52px;color:#606366">38</div>
<div class="a code" style="left:900px;top:1574px;height:52px">            r.Response.<span class="fc">Header</span>().<span class="fc">Set</span>(<span class="s">&quot;Cache-Control&quot;</span><span class="k">,</span> <span class="s">&quot;no-store&quot;</span>)</div>
<div class="a ln" style="left:738px;top:1626px;width:60px;height:52px;color:#606366">39</div>
<div class="a code" style="left:900px;top:1626px;height:52px">        })</div>
<div class="a ln" style="left:738px;top:1678px;width:60px;height:52px;color:#606366">40</div>
<div class="a code" style="left:900px;top:1678px;height:52px">    }</div>
<div class="a ln" style="left:738px;top:1730px;width:60px;height:52px;color:#606366">41</div>
<div class="a ln" style="left:738px;top:1782px;width:60px;height:52px;color:#606366">42</div>
<div class="a code" style="left:900px;top:1782px;height:52px">    <span class="c">// <span class="cj">前台系统自定义错误页面</span></span></div>
<div class="a ln" style="left:738px;top:1834px;width:60px;height:52px;color:#606366">43</div>
<div class="a code" style="left:900px;top:1834px;height:52px">    s.<span class="fc">BindStatusHandler</span>(<span class="n">401</span><span class="k">,</span> <span class="k">func</span>(r *<span class="p">ghttp</span>.<span class="t">Request</span>) {</div>
<div class="a ln" style="left:738px;top:1886px;width:60px;height:52px;color:#606366">44</div>
<div class="a code" style="left:900px;top:1886px;height:52px">        <span class="k">if</span> !<span class="p">gstr</span>.<span class="fc">HasPrefix</span>(r.URL.Path<span class="k">,</span> <span class="s">&quot;/admin&quot;</span>) {</div>
<svg style="left:875px;top:289px;" width="22" height="22" viewBox="0 0 22 22"><rect x="1" y="1" width="20" height="20" fill="#2b2b2b" stroke="#5a5c5e" stroke-width="2"/><path d="M5 11H17M11 5V17" stroke="#5a5c5e" stroke-width="2"/></svg>
<svg style="left:875px;top:445.3px;" width="22" height="29" viewBox="0 0 22 29"><path d="M1 1 H21 V18 L11 27.3 L1 18 Z" fill="#2b2b2b" stroke="#5a5c5e" stroke-width="2"/><path d="M5 10.9H17" stroke="#5a5c5e" stroke-width="2"/></svg>
<svg style="left:875px;top:497.3px;" width="22" height="29" viewBox="0 0 22 29"><path d="M1 1 H21 V18 L11 27.3 L1 18 Z" fill="#2b2b2b" stroke="#5a5c5e" stroke-width="2"/><path d="M5 10.9H17" stroke="#5a5c5e" stroke-width="2"/></svg>
<svg style="left:875px;top:1173.3px;" width="22" height="29" viewBox="0 0 22 29"><path d="M1 1 H21 V18 L11 27.3 L1 18 Z" fill="#2b2b2b" stroke="#5a5c5e" stroke-width="2"/><path d="M5 10.9H17" stroke="#5a5c5e" stroke-width="2"/></svg>
<svg style="left:875px;top:1485.3px;" width="22" height="29" viewBox="0 0 22 29"><path d="M1 1 H21 V18 L11 27.3 L1 18 Z" fill="#2b2b2b" stroke="#5a5c5e" stroke-width="2"/><path d="M5 10.9H17" stroke="#5a5c5e" stroke-width="2"/></svg>
<svg style="left:875px;top:1537.3px;" width="22" height="29" viewBox="0 0 22 29"><path d="M1 1 H21 V18 L11 27.3 L1 18 Z" fill="#2b2b2b" stroke="#5a5c5e" stroke-width="2"/><path d="M5 10.9H17" stroke="#5a5c5e" stroke-width="2"/></svg>
<svg style="left:875px;top:1849.3px;" width="22" height="29" viewBox="0 0 22 29"><path d="M1 1 H21 V18 L11 27.3 L1 18 Z" fill="#2b2b2b" stroke="#5a5c5e" stroke-width="2"/><path d="M5 10.9H17" stroke="#5a5c5e" stroke-width="2"/></svg>
<svg style="left:875px;top:1901.3px;" width="22" height="29" viewBox="0 0 22 29"><path d="M1 1 H21 V18 L11 27.3 L1 18 Z" fill="#2b2b2b" stroke="#5a5c5e" stroke-width="2"/><path d="M5 10.9H17" stroke="#5a5c5e" stroke-width="2"/></svg>
<svg style="left:875px;top:699.5px;" width="22" height="29" viewBox="0 0 22 29"><path d="M1 27.7 H21 V11 L11 1.6 L1 11 Z" fill="#2b2b2b" stroke="#5a5c5e" stroke-width="2"/><path d="M5 16.5H17" stroke="#5a5c5e" stroke-width="2"/></svg>
<svg style="left:875px;top:1271.5px;" width="22" height="29" viewBox="0 0 22 29"><path d="M1 27.7 H21 V11 L11 1.6 L1 11 Z" fill="#2b2b2b" stroke="#5a5c5e" stroke-width="2"/><path d="M5 16.5H17" stroke="#5a5c5e" stroke-width="2"/></svg>
<svg style="left:875px;top:1635.5px;" width="22" height="29" viewBox="0 0 22 29"><path d="M1 27.7 H21 V11 L11 1.6 L1 11 Z" fill="#2b2b2b" stroke="#5a5c5e" stroke-width="2"/><path d="M5 16.5H17" stroke="#5a5c5e" stroke-width="2"/></svg>
<svg style="left:875px;top:1687.5px;" width="22" height="29" viewBox="0 0 22 29"><path d="M1 27.7 H21 V11 L11 1.6 L1 11 Z" fill="#2b2b2b" stroke="#5a5c5e" stroke-width="2"/><path d="M5 16.5H17" stroke="#5a5c5e" stroke-width="2"/></svg>
<div class="a" style="left:912px;top:768px;width:954.5px;height:273.5px;border:6px solid #ea4025;border-radius:12px"></div>
<svg style="left:1880px;top:600px;" width="310" height="180" viewBox="0 0 310 180"><path d="M10.8 168.5 L40.6 116 L44.4 134.1 L284 11.5 A6 6 0 0 1 293.6 18.7 L57.7 158.4 L71.6 171.6 Z" fill="#ea4025"/></svg>
<svg style="left:3504px;top:183px;" width="24" height="20" viewBox="0 0 24 20"><path d="M2 9.8 L9.3 16.2 L21.6 2.8" fill="none" stroke="#499c54" stroke-width="5"/></svg>
<div class="a" style="left:3520px;top:224px;width:16px;height:596px;background:#4a4a4a;border-radius:8px"></div>
<div class="a" style="left:738px;top:1942px;width:2804px;height:2px;background:#383a3c;"></div>
<div class="a" style="left:738px;top:1944px;width:2804px;height:43px;background:#2f3133;"></div>
<div class="a " style="left:906px;top:1950px;font-size:24.6px;line-height:30px;color:#bbbbbb;white-space:nowrap;-webkit-text-stroke:.3px">Run()</div>
<div class="a" style="left:2px;top:114px;width:38px;height:144px;background:#2b2d2f;"></div>
<div class="a" style="left:40px;top:114px;width:2px;height:1873px;background:#323537;"></div>
<div class="vt" style="left:6.9px;top:201px;transform:rotate(-90deg);color:#ffffff;font-size:22.5px;line-height:26px;height:26px">Project</div>
<svg style="left:10px;top:214px;" width="22" height="18" viewBox="0 0 22 18"><path d="M0 0 H9 L12 3.8 H22 V18 H0 Z" fill="#afb1b3"/></svg>
<div class="vt" style="left:6.9px;top:355.5px;transform:rotate(-90deg);color:#bbbbbb;font-size:22.5px;line-height:26px;height:26px">Commit</div>
<svg style="left:8px;top:365px;" width="26" height="21" viewBox="0 0 26 21"><path d="M0 10.5H7M19 10.5H26" stroke="#afb1b3" stroke-width="4"/><circle cx="13" cy="10.5" r="6.2" fill="none" stroke="#afb1b3" stroke-width="4"/></svg>
<div class="vt" style="left:6.9px;top:569px;transform:rotate(-90deg);color:#bbbbbb;font-size:22.5px;line-height:26px;height:26px">Pull Requests</div>
<svg style="left:11px;top:580px;" width="22" height="23" viewBox="0 0 22 23"><rect x="1" y="0.5" width="4.2" height="22" fill="#afb1b3"/><path d="M6.8 8 L13.8 1.6 V14.4 Z" fill="#afb1b3"/><path d="M13 8 H19.3 V20.4" fill="none" stroke="#afb1b3" stroke-width="3.8"/></svg>
<div class="vt" style="left:6.9px;top:1597.5px;transform:rotate(-90deg);color:#bbbbbb;font-size:22.5px;line-height:26px;height:26px">Structure</div>
<svg style="left:12px;top:1610px;" width="18" height="18" viewBox="0 0 18 18"><rect x="10" y="0" width="8" height="7.5" fill="#afb1b3"/><rect x="0" y="10.5" width="8" height="7.5" fill="#afb1b3"/><rect x="10" y="10.5" width="8" height="7.5" fill="#afb1b3"/></svg>
<div class="vt" style="left:6.9px;top:1765px;transform:rotate(-90deg);color:#bbbbbb;font-size:22.5px;line-height:26px;height:26px">Favorites</div>
<svg style="left:8px;top:1774px;" width="26" height="25" viewBox="0 0 26 25"><path d="M13 0 L16.4 8.6 L26 9.4 L18.6 15.5 L21 24.8 L13 19.6 L5 24.8 L7.4 15.5 L0 9.4 L9.6 8.6 Z" fill="#afb1b3"/></svg>
<div class="vt" style="left:6.9px;top:1929.5px;transform:rotate(-90deg);color:#bbbbbb;font-size:22.5px;line-height:26px;height:26px">OpenAPI</div>
<svg style="left:8px;top:1938px;" width="26" height="25" viewBox="0 0 26 25"><rect x="1" y="1" width="24" height="23" fill="#2b2b2b" stroke="#0e0e0e" stroke-width="2"/><rect x="0" y="0" width="26" height="6" fill="#0e0e0e"/><circle cx="18" cy="3" r="0.9" fill="#9a9a9a"/><circle cx="20.7" cy="3" r="0.9" fill="#9a9a9a"/><circle cx="23.3" cy="3" r="0.9" fill="#9a9a9a"/><text x="13" y="19.5" font-family="Liberation Sans, sans-serif" font-weight="bold" font-size="9.6" fill="#b8b8b8" text-anchor="middle">/API</text></svg>
<div class="a" style="left:3542px;top:114px;width:2px;height:1873px;background:#323537;"></div>
<svg style="left:3552px;top:134px;" width="23" height="25" viewBox="0 0 23 25"><ellipse cx="11.5" cy="3.6" rx="11" ry="3.6" fill="#afb1b3"/><path d="M0.5 6.5 A11 3.6 0 0 0 22.5 6.5 V9.5 A11 3.6 0 0 1 0.5 9.5Z" fill="#afb1b3"/><path d="M0.5 12 A11 3.6 0 0 0 22.5 12 V15 A11 3.6 0 0 1 0.5 15Z" fill="#afb1b3"/><path d="M0.5 17.5 A11 3.6 0 0 0 22.5 17.5 V21 A11 3.6 0 0 1 0.5 21Z" fill="#afb1b3"/></svg>
<div class="vt" style="left:3576px;top:168.5px;transform:rotate(90deg);color:#bbbbbb;font-size:22.1px;line-height:26px;height:26px">Database</div>
<div class="a" style="left:3551px;top:1612px;width:24px;text-align:center;color:#bbbbbb;font-size:22.5px;font-weight:bold;line-height:26px">M</div>
<div class="vt" style="left:3576px;top:1648.5px;transform:rotate(90deg);color:#bbbbbb;font-size:22.5px;line-height:26px;height:26px">make</div>
<svg style="left:3550px;top:1747px;" width="26" height="25" viewBox="0 0 26 25"><rect x="1" y="1" width="24" height="23" fill="#2b2b2b" stroke="#0e0e0e" stroke-width="2"/><rect x="0" y="0" width="26" height="6" fill="#0e0e0e"/><circle cx="18" cy="3" r="0.9" fill="#9a9a9a"/><circle cx="20.7" cy="3" r="0.9" fill="#9a9a9a"/><circle cx="23.3" cy="3" r="0.9" fill="#9a9a9a"/><text x="13" y="19.5" font-family="Liberation Sans, sans-serif" font-weight="bold" font-size="9.6" fill="#b8b8b8" text-anchor="middle">/API</text></svg>
<div class="vt" style="left:3576px;top:1780px;transform:rotate(90deg);color:#bbbbbb;font-size:22.5px;line-height:26px;height:26px">API Security Audit</div>
<div class="a" style="left:0px;top:1987px;width:3584px;height:1.5px;background:#323537;"></div>
<div class="a" style="left:0px;top:2028.5px;width:3584px;height:1.5px;background:#47494b;"></div>
<svg style="left:62px;top:1997px;" width="16" height="23.5" viewBox="0 0 19 28"><circle cx="4.4" cy="4.4" r="4.2" fill="#afb1b3"/><circle cx="4.4" cy="23.6" r="4.2" fill="#afb1b3"/><circle cx="14.6" cy="7.4" r="4.2" fill="#afb1b3"/><path d="M4.4 4 V24 M14.6 7.4 C14.6 15.5 4.4 13.5 4.4 20.5" fill="none" stroke="#afb1b3" stroke-width="3.6"/></svg>
<div class="a sm" style="left:92.5px;top:1995px;">Git</div>
<svg style="left:164px;top:1999px;" width="20" height="17" viewBox="0 0 20 17"><path d="M0 1.5H3.5M0 8.5H3.5M0 15.5H3.5" stroke="#afb1b3" stroke-width="3"/><path d="M6 1.5H20M6 8.5H20M6 15.5H20" stroke="#afb1b3" stroke-width="3"/></svg>
<div class="a sm" style="left:195px;top:1995px;letter-spacing:-.8px">TODO</div>
<svg style="left:298.5px;top:1997px;" width="21" height="21" viewBox="0 0 21 21"><circle cx="10.5" cy="10.5" r="10.5" fill="#afb1b3"/><path d="M10.5 4.5V12" stroke="#3c3f41" stroke-width="3"/><circle cx="10.5" cy="15.8" r="1.7" fill="#3c3f41"/></svg>
<div class="a sm" style="left:330.5px;top:1995px;">Problems</div>
<svg style="left:470px;top:1998px;" width="22" height="19" viewBox="0 0 22 19"><rect x="0" y="0" width="22" height="19" fill="#afb1b3"/><path d="M3.5 4.5 L8.5 9 L3.5 13.5" fill="none" stroke="#3c3f41" stroke-width="2.4"/><path d="M10 14H18" stroke="#3c3f41" stroke-width="2.4"/></svg>
<div class="a sm" style="left:503px;top:1995px;">Terminal</div>
<svg style="left:3152px;top:1994.5px;" width="27" height="27" viewBox="0 0 27 27"><path d="M13.5 1.7 A11.8 11.8 0 1 0 13.5 25.3 H25.3 V13.5 A11.8 11.8 0 0 0 13.5 1.7 Z" fill="none" stroke="#afb1b3" stroke-width="3"/></svg>
<div class="a sm" style="left:3186.5px;top:1995px;">Event Log</div>
<svg style="left:3330px;top:1995.5px;" width="26" height="25" viewBox="0 0 26 25"><rect x="1" y="1" width="24" height="23" fill="#2b2b2b" stroke="#0e0e0e" stroke-width="2"/><rect x="0" y="0" width="26" height="6" fill="#0e0e0e"/><circle cx="18" cy="3" r="0.9" fill="#9a9a9a"/><circle cx="20.7" cy="3" r="0.9" fill="#9a9a9a"/><circle cx="23.3" cy="3" r="0.9" fill="#9a9a9a"/><text x="13" y="19.5" font-family="Liberation Sans, sans-serif" font-weight="bold" font-size="9.6" fill="#b8b8b8" text-anchor="middle">/API</text></svg>
<div class="a sm" style="left:3365px;top:1995px;">Audit Problems</div>
<svg style="left:11px;top:2037px;" width="27" height="26" viewBox="0 0 27 26"><rect x="6" y="2" width="18.4" height="18" fill="none" stroke="#afb1b3" stroke-width="2.2"/><path d="M2 5.5V24H20.5" fill="none" stroke="#afb1b3" stroke-width="2.2"/></svg>
<div class="a sm" style="left:3050.5px;top:2036.5px;">27:1</div>
<div class="a sm" style="left:3116.5px;top:2036.5px;">LF</div>
<div class="a sm" style="left:3165px;top:2036.5px;">UTF-8</div>
<div class="a sm" style="left:3255px;top:2036.5px;">Tab</div>
<svg style="left:3318.5px;top:2036px;" width="19" height="28" viewBox="0 0 19 28"><circle cx="4.4" cy="4.4" r="4.2" fill="#afb1b3"/><circle cx="4.4" cy="23.6" r="4.2" fill="#afb1b3"/><circle cx="14.6" cy="7.4" r="4.2" fill="#afb1b3"/><path d="M4.4 4 V24 M14.6 7.4 C14.6 15.5 4.4 13.5 4.4 20.5" fill="none" stroke="#afb1b3" stroke-width="3.6"/></svg>
<div class="a sm" style="left:3349px;top:2036.5px;">master</div>
<svg style="left:3438px;top:2038px;" width="23" height="23" viewBox="0 0 23 23"><path d="M2.5 9.5 V6 A4.2 4.2 0 0 1 11 6 V11" fill="none" stroke="#afb1b3" stroke-width="2.6"/><rect x="7" y="10.5" width="16" height="12.5" fill="#afb1b3"/></svg>
<svg style="left:3483px;top:2035px;" width="34" height="32" viewBox="0 0 34 32"><path d="M8 22 A7 7 0 0 1 7.5 8.5 A9.5 9.5 0 0 1 25.5 9.5 A6.3 6.3 0 0 1 27 21 H8Z" fill="#afb1b3"/><text x="15.5" y="19" font-family="Liberation Sans, sans-serif" font-weight="bold" font-size="17" fill="#3c3f41" text-anchor="middle">?</text><circle cx="25.5" cy="24.5" r="7.8" fill="#3c3f41"/><circle cx="25.5" cy="24.5" r="4" fill="none" stroke="#afb1b3" stroke-width="3"/><path d="M25.5 18V31M19 24.5H32M21 20L30 29M30 20L21 29" stroke="#afb1b3" stroke-width="2.2"/><circle cx="25.5" cy="24.5" r="1.7" fill="#3c3f41"/></svg>
<svg style="left:3536px;top:2038px;" width="24" height="24" viewBox="0 0 24 24"><circle cx="12" cy="12" r="12" fill="#c75450"/><rect x="10.2" y="4.3" width="3.7" height="7.6" fill="#3c3f41"/><rect x="10.2" y="16.3" width="3.7" height="3.6" fill="#3c3f41"/></svg>
<div class="a" style="left:0;top:0;width:3584px;height:2070px;border:2px solid #5f6365;border-top-color:#85878a;border-radius:20px"></div>
</div>
</body>
</html>
